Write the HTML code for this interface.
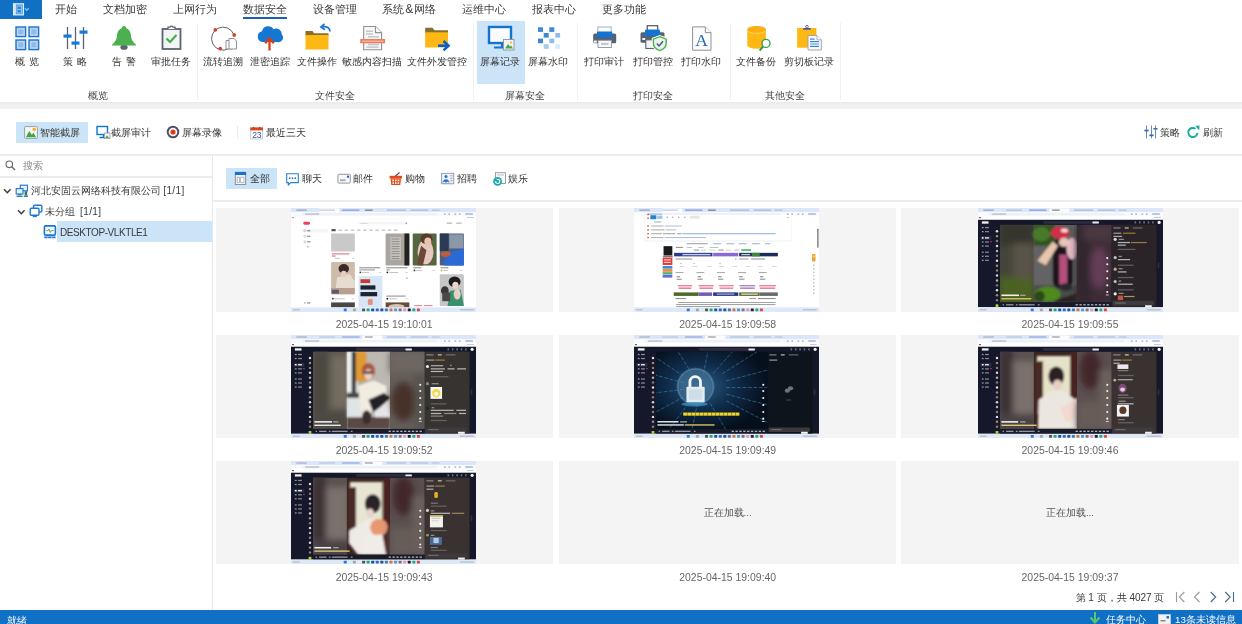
<!DOCTYPE html>
<html lang="zh"><head><meta charset="utf-8"><title>UI</title><style>
*{margin:0;padding:0;box-sizing:border-box}
html,body{width:1242px;height:624px;overflow:hidden;background:#fff}
#root{position:absolute;left:0;top:0;width:1242px;height:624px;will-change:transform}
body{font-family:"Liberation Sans",sans-serif;font-size:10px;color:#444;position:relative}
.a{position:absolute;white-space:nowrap}
.tab{position:absolute;top:2px;font-size:11px;line-height:14px;color:#3a3a3a;white-space:nowrap}
.rl{position:absolute;top:56px;font-size:9.75px;line-height:12px;color:#333;white-space:nowrap;text-align:center;transform:translateX(-50%)}
.gl{position:absolute;top:89.5px;font-size:9.75px;line-height:12px;color:#444;white-space:nowrap;transform:translateX(-50%)}
.sep{position:absolute;top:23px;width:1px;height:77px;background:#efefef}
.ic{position:absolute}
.lat{font-size:10px !important}
.sp{display:inline-block;width:4.5px}
.tb{position:absolute;font-size:9.75px;line-height:12px;color:#333;white-space:nowrap}
.cell{position:absolute;width:337.2px;height:104.2px;background:#f4f4f4}
.ts{position:absolute;width:337.2px;text-align:center;font-size:10.45px;line-height:12px;color:#666;white-space:nowrap}
.thumb{position:absolute;left:75.8px;top:0;width:185.2px;height:100%;overflow:hidden}
</style></head><body><div id="root">
<div class="a" style="left:0;top:0;width:42px;height:19px;background:#1170c4"></div>
<svg class="ic" style="left:12px;top:2px" width="20" height="15" viewBox="0 0 20 15"><rect x="1.600" y="1.800" width="9.800" height="11" fill="#3f97e4" stroke="#d6ecff" stroke-width="1.300"/><rect x="2.300" y="2" width="1.400" height="10.600" fill="#fff"/><rect x="5" y="4" width="4.600" height="7" fill="#2f86d6" stroke="#a9d2f7" stroke-width="0.800"/><rect x="5.800" y="7" width="3" height="0.900" fill="#a9d2f7"/><path d="M12.800 6.300 L14.800 8.300 L16.800 6.300" fill="none" stroke="#74bcff" stroke-width="1.500"/></svg>
<div class="tab" style="left:55px">开始</div>
<div class="tab" style="left:103px">文档加密</div>
<div class="tab" style="left:173px">上网行为</div>
<div class="tab" style="left:243px">数据安全</div>
<div class="tab" style="left:313px">设备管理</div>
<div class="tab" style="left:382px">系统<span style="font-size:12px;padding:0 1.2px;line-height:10px">&amp;</span>网络</div>
<div class="tab" style="left:462px">运维中心</div>
<div class="tab" style="left:532px">报表中心</div>
<div class="tab" style="left:602px">更多功能</div>
<div class="a" style="left:243px;top:17px;width:44px;height:2px;background:#1a5fb0"></div>
<div class="a" style="left:477px;top:21px;width:48px;height:63px;background:#cce4f7"></div>
<div class="sep" style="left:197px"></div>
<div class="sep" style="left:473px"></div>
<div class="sep" style="left:577px"></div>
<div class="sep" style="left:730px"></div>
<div class="sep" style="left:840px"></div>
<div class="a" style="left:0;top:101.700px;width:1242px;height:7.600px;background:linear-gradient(#e9e9e9,#f0f0f0 30%,#f3f3f3)"></div>
<svg class="ic" style="left:15px;top:26px" width="25" height="25" viewBox="0 0 25 25"><g fill="#b9d5f2" stroke="#1e73c8" stroke-width="1.4"><rect x="1" y="1" width="9.6" height="9.6"/><rect x="14" y="1" width="9.6" height="9.6"/><rect x="1" y="14" width="9.6" height="9.6"/><rect x="14" y="14" width="9.6" height="9.6"/></g><g fill="#8fbbe8"><rect x="3.3" y="3.3" width="5" height="5"/><rect x="16.3" y="3.3" width="5" height="5"/><rect x="3.3" y="16.3" width="5" height="5"/><rect x="16.3" y="16.3" width="5" height="5"/></g></svg>
<svg class="ic" style="left:63px;top:26px" width="25" height="25" viewBox="0 0 25 25"><g stroke="#5a6372" stroke-width="1.3"><line x1="4.5" y1="1" x2="4.5" y2="23"/><line x1="12.5" y1="1" x2="12.5" y2="23"/><line x1="20.5" y1="1" x2="20.5" y2="23"/></g><g fill="#1579d6"><rect x="0.5" y="8.5" width="8" height="3.2"/><rect x="8.5" y="15.5" width="8" height="3.2"/><rect x="16.5" y="4.5" width="8" height="3.2"/></g></svg>
<svg class="ic" style="left:111px;top:25px" width="26" height="26" viewBox="0 0 26 26"><ellipse cx="13" cy="22.2" rx="3.6" ry="2.6" fill="#5a6372"/><path d="M13 1 C14.4 1 15.2 2 15.2 3.2 C18.6 4.4 19.8 7.6 20 11 C20.2 15 22.5 17.5 25 19.8 L25 20.6 L1 20.6 L1 19.8 C3.5 17.5 5.800 15 6 11 C6.200 7.600 7.400 4.400 10.800 3.200 C10.800 2 11.600 1 13 1 Z" fill="#4caf50"/></svg>
<svg class="ic" style="left:160px;top:24px" width="24" height="27" viewBox="0 0 24 27"><rect x="2.5" y="5" width="18" height="20" fill="#f3f4f6" stroke="#5a6372" stroke-width="1.8"/><path d="M8 5 L8 3.200 L10 3.200 A1.600 1.600 0 0 1 13 3.200 L15 3.200 L15 5" fill="#fff" stroke="#5a6372" stroke-width="1.3"/><path d="M6.500 14.500 L10 18 L16.500 11" fill="none" stroke="#3fae49" stroke-width="2"/></svg>
<svg class="ic" style="left:209.900px;top:24.700px" width="30" height="28" viewBox="0 0 30 28"><path d="M18.500 23.800 A11.500 11.500 0 1 1 23.600 9" fill="none" stroke="#4a4f57" stroke-width="0.900"/><circle cx="5.300" cy="4.800" r="1.900" fill="#d2432c"/><circle cx="24.200" cy="10" r="1.900" fill="#d2432c"/><circle cx="10.200" cy="23.600" r="1.900" fill="#d2432c"/><path d="M16 15.500 h6 v8.500 h-6z" fill="#fff" stroke="#8d9299" stroke-width="1"/><path d="M19 13.500 h5 l2.500 2.500 v8 h-7.500z" fill="#fff" stroke="#8d9299" stroke-width="1"/></svg>
<svg class="ic" style="left:256.200px;top:25px" width="27" height="27" viewBox="0 0 27 27"><path d="M6.500 17 A5.500 5.500 0 0 1 6 6.200 A6.500 6.500 0 0 1 17.800 4.200 A5.500 5.500 0 0 1 25.800 9.500 A4.500 4.500 0 0 1 21.500 17 Z" fill="#1677d2"/><path d="M13.500 25.500 L13.500 14.500" stroke="#dc3c12" stroke-width="2.300" fill="none"/><path d="M9.200 18.200 L13.500 13.500 L17.800 18.200" stroke="#dc3c12" stroke-width="2.300" fill="none"/></svg>
<svg class="ic" style="left:303px;top:23.300px" width="30" height="28" viewBox="0 0 30 28"><path d="M2.500 8 L9.500 8 L11 10.200 L25.500 10.200 L25.500 13 L2.500 13 Z" fill="#8a6d2b"/><rect x="2.500" y="12" width="23" height="14.500" fill="#fdb813"/><path d="M27 8.500 C27 4.500 23.500 3.200 19.500 3.800" fill="none" stroke="#1677d2" stroke-width="1.800"/><path d="M21.500 0.800 L18 4 L21.800 6.800" fill="none" stroke="#1677d2" stroke-width="1.800"/></svg>
<svg class="ic" style="left:359px;top:24px" width="28" height="28" viewBox="0 0 28 28"><path d="M4.700 2.500 L16.500 2.500 L22.600 8.600 L22.600 25.800 L4.700 25.800 Z" fill="#f8f8f9" stroke="#8d9299" stroke-width="1.100"/><path d="M16.500 2.500 L16.500 8.600 L22.600 8.600" fill="#fff" stroke="#8d9299" stroke-width="1.100"/><g fill="#c3c6cd"><rect x="7" y="6.500" width="7" height="1.500"/><rect x="7" y="9.300" width="7" height="1.500"/><rect x="9" y="12" width="11" height="1.500"/><rect x="9" y="19.800" width="11" height="1.500"/><rect x="7.500" y="22.400" width="12" height="1.500"/></g><rect x="1.300" y="15" width="24.800" height="4.300" fill="#ee7b5a"/><rect x="3" y="16.700" width="21.500" height="0.900" fill="#fbd3c6"/></svg>
<svg class="ic" style="left:424px;top:25px" width="28" height="27" viewBox="0 0 28 27"><path d="M1.200 2.700 L8.500 2.700 L10.500 5.300 L24 5.300 L24 8.500 L1.200 8.500 Z" fill="#8a6d2b"/><rect x="1.200" y="7.300" width="22.800" height="15.200" fill="#fdb813"/><path d="M14 20.700 L24 20.700" stroke="#0a5fcb" stroke-width="2.600" fill="none"/><path d="M19.500 16 L24.500 20.700 L19.500 25.400" stroke="#0a5fcb" stroke-width="2.600" fill="none"/></svg>
<svg class="ic" style="left:487px;top:25px" width="28" height="27" viewBox="0 0 28 27"><rect x="2" y="2" width="22" height="16" fill="#fdfdff" stroke="#1273d0" stroke-width="2.400"/><path d="M7 22.500 L15 22.500 L15 19" fill="none" stroke="#1273d0" stroke-width="2.200"/><rect x="16.500" y="14.500" width="10.500" height="10.500" fill="#f2f2f2" stroke="#8d9299" stroke-width="0.900"/><path d="M18 23.500 L21 19 L23 21.500 L24 20.500 L26 23.500 Z" fill="#4aa84a"/><circle cx="24" cy="17.500" r="1.100" fill="#f5b31b"/></svg>
<svg class="ic" style="left:537px;top:26px" width="25" height="25" viewBox="0 0 25 25"><g fill="#3f88d4"><rect x="1" y="1.300" width="5" height="4.600"/><rect x="12.300" y="1.300" width="5" height="4.600"/><rect x="6.700" y="7" width="5" height="4.600"/><rect x="1" y="12.600" width="5" height="4.600"/></g><g fill="#93bde9"><rect x="18.300" y="7" width="4.800" height="4.600"/><rect x="12.300" y="12.600" width="5" height="4.600"/><rect x="6.700" y="18.200" width="5" height="4.600" opacity="0.8"/></g><rect x="18.300" y="18.200" width="4.800" height="4.600" fill="#dbe9f8"/></svg>
<svg class="ic" style="left:592px;top:26px" width="25" height="25" viewBox="0 0 25 25"><rect x="5.800" y="1" width="13.400" height="6" fill="#fafafa" stroke="#a3a8b0" stroke-width="0.900"/><rect x="1.200" y="7.500" width="23" height="9.800" rx="1.500" fill="#566173"/><rect x="5" y="5.600" width="15.200" height="5.800" rx="0.800" fill="#1273d0"/><rect x="1.800" y="14.500" width="3" height="2.200" fill="#f3f4f6"/><rect x="6" y="14.300" width="13.400" height="7.200" fill="#fafafa" stroke="#8d939d" stroke-width="0.900"/><rect x="9" y="16.800" width="7.500" height="2.200" fill="#c5c8ce"/></svg>
<svg class="ic" style="left:640px;top:25px" width="28" height="27" viewBox="0 0 28 27"><rect x="7.300" y="0.700" width="10.400" height="5.500" fill="#fff" stroke="#566173" stroke-width="1.300"/><rect x="0.500" y="7.200" width="24" height="10.600" rx="1.500" fill="#566173"/><rect x="5" y="4.600" width="15" height="6.300" rx="1.200" fill="#1273d0"/><rect x="2.300" y="13" width="3" height="2" fill="#f3f4f6"/><rect x="5.800" y="14.800" width="8" height="8.700" fill="#f3f4f6" stroke="#566173" stroke-width="1.100"/><path d="M19.800 11.700 L26.200 14.200 L26.200 18.500 C26.200 22 23 24.400 19.800 25.600 C16.600 24.400 13.400 22 13.400 18.500 L13.400 14.200 Z" fill="#e4f5e6" stroke="#fff" stroke-width="3.200"/><path d="M19.800 11.700 L26.200 14.200 L26.200 18.500 C26.200 22 23 24.400 19.800 25.600 C16.600 24.400 13.400 22 13.400 18.500 L13.400 14.200 Z" fill="#e4f5e6" stroke="#4caf50" stroke-width="1.400"/><path d="M16.800 18.600 L19 20.900 L23 16.300" fill="none" stroke="#5a4a8a" stroke-width="1.400"/></svg>
<svg class="ic" style="left:690px;top:25px" width="23" height="27" viewBox="0 0 23 27"><path d="M2.600 1.900 L15.300 1.900 L21 7.600 L21 25.200 L2.600 25.200 Z" fill="#fcfcfd" stroke="#8d9299" stroke-width="1"/><path d="M15.300 1.900 L15.300 7.600 L21 7.600" fill="#fff" stroke="#8d9299" stroke-width="1"/><text x="11.500" y="21.300" font-family="Liberation Serif,serif" font-size="17.500" fill="#2468b8" text-anchor="middle">A</text></svg>
<svg class="ic" style="left:746px;top:25px" width="27" height="28" viewBox="0 0 27 28"><path d="M1.300 4.200 L1.300 20.300 A9.300 3.400 0 0 0 19.900 20.300 L19.900 4.200 Z" fill="#fdb813"/><ellipse cx="10.600" cy="4.400" rx="9.300" ry="3.300" fill="#fbad0e"/><path d="M1.800 5.800 A9 3.200 0 0 0 19.400 5.800" fill="none" stroke="#fee08a" stroke-width="0.700"/><circle cx="20" cy="18.400" r="4" fill="#fff" stroke="#319f4c" stroke-width="1.300"/><path d="M17.200 21.500 L13.600 25.500" stroke="#319f4c" stroke-width="1.900" fill="none"/></svg>
<svg class="ic" style="left:796px;top:24px" width="27" height="29" viewBox="0 0 27 29"><rect x="1.100" y="4" width="19.300" height="19.700" fill="#fdb813"/><path d="M7.300 5.800 L7.300 4 L9.800 4 A1.900 1.900 0 0 1 12.200 4 L14.700 4 L14.700 5.800 Z" fill="#4a5a9a"/><circle cx="11" cy="2.700" r="1.300" fill="#fff" stroke="#4a5a9a" stroke-width="0.900"/><path d="M12 11.500 L21 11.500 L25.300 15.800 L25.300 26 L12 26 Z" fill="#f8f8fa" stroke="#9aa0aa" stroke-width="0.900"/><path d="M21 11.500 L21 15.800 L25.300 15.800" fill="#fff" stroke="#9aa0aa" stroke-width="0.800"/><g fill="#3a82d8"><rect x="14" y="14.500" width="4.500" height="1.200"/><rect x="14" y="17" width="9" height="1.200"/><rect x="14" y="21.800" width="9" height="1.200"/></g><rect x="14" y="19.400" width="9" height="1.200" fill="#5ab4d8"/></svg>
<div class="rl" style="left:27px">概<span class="sp"></span>览</div>
<div class="rl" style="left:75px">策<span class="sp"></span>略</div>
<div class="rl" style="left:124px">告<span class="sp"></span>警</div>
<div class="rl" style="left:171px">审批任务</div>
<div class="rl" style="left:223px">流转追溯</div>
<div class="rl" style="left:270px">泄密追踪</div>
<div class="rl" style="left:317px">文件操作</div>
<div class="rl" style="left:372px">敏感内容扫描</div>
<div class="rl" style="left:437px">文件外发管控</div>
<div class="rl" style="left:500px">屏幕记录</div>
<div class="rl" style="left:548px">屏幕水印</div>
<div class="rl" style="left:604px">打印审计</div>
<div class="rl" style="left:653px">打印管控</div>
<div class="rl" style="left:701px">打印水印</div>
<div class="rl" style="left:756px">文件备份</div>
<div class="rl" style="left:809px">剪切板记录</div>
<div class="gl" style="left:98px">概览</div>
<div class="gl" style="left:335px">文件安全</div>
<div class="gl" style="left:525px">屏幕安全</div>
<div class="gl" style="left:653px">打印安全</div>
<div class="gl" style="left:785px">其他安全</div>
<div class="a" style="left:0;top:154.200px;width:1242px;height:2.200px;background:#ededed"></div>
<div class="a" style="left:16px;top:122px;width:72px;height:21px;background:#cce4f7"></div>
<svg class="ic" style="left:24px;top:126px" width="14" height="13" viewBox="0 0 14 13"><rect x="0.600" y="0.600" width="12.800" height="11.800" rx="0.800" fill="#f6f6f6" stroke="#9a9fa6" stroke-width="1"/><path d="M1.800 11.200 L5.200 5 L7.800 8.800 L9.500 6.800 L12.200 11.200 Z" fill="#3fa64a"/><circle cx="10.200" cy="3.400" r="1.700" fill="#f2b01e"/></svg>
<div class="tb" style="left:40px;top:127px">智能截屏</div>
<svg class="ic" style="left:95.800px;top:125px" width="15" height="15" viewBox="0 0 15 15"><rect x="1" y="1.500" width="10.500" height="8" fill="#fff" stroke="#1273d0" stroke-width="1.400"/><path d="M3.500 12.500 L7.500 12.500 L7.500 10" fill="none" stroke="#1273d0" stroke-width="1.400"/><rect x="8.300" y="8" width="5.700" height="5.700" fill="#f2f2f2" stroke="#8d9299" stroke-width="0.700"/><path d="M9 13 L11 10.500 L13.300 13 Z" fill="#4aa84a"/></svg>
<div class="tb" style="left:111px;top:127px">截屏审计</div>
<svg class="ic" style="left:166px;top:125px" width="14" height="14" viewBox="0 0 14 14"><circle cx="7" cy="7" r="5.300" fill="#fff" stroke="#4d5068" stroke-width="2"/><circle cx="7" cy="7" r="2.600" fill="#e23d12"/></svg>
<div class="tb" style="left:182px;top:127px">屏幕录像</div>
<div class="a" style="left:237px;top:126px;width:1px;height:13px;background:#ebebeb"></div>
<svg class="ic" style="left:250px;top:126.500px" width="14" height="13" viewBox="0 0 14 13"><rect x="0.700" y="0.800" width="12" height="11.200" fill="#fdfdfe" stroke="#b9bec6" stroke-width="0.800"/><rect x="0.400" y="0.500" width="12.600" height="2.900" fill="#e2441c"/><rect x="3" y="0" width="1.200" height="1.600" fill="#a8300e"/><rect x="9.200" y="0" width="1.200" height="1.600" fill="#a8300e"/><text x="6.700" y="10.900" font-size="8.600" font-family="Liberation Sans,sans-serif" fill="#3a5a9a" text-anchor="middle" letter-spacing="-0.300">23</text></svg>
<div class="tb" style="left:266px;top:127px">最近三天</div>
<svg class="ic" style="left:1143px;top:125px" width="15" height="15" viewBox="0 0 15 15"><g stroke="#4d6a96" stroke-width="0.800"><line x1="3.500" y1="0.500" x2="3.500" y2="13.300"/><line x1="8.500" y1="0.500" x2="8.500" y2="13.300"/><line x1="12.500" y1="0.500" x2="12.500" y2="13.300"/></g><g fill="#2a6ab8"><rect x="1.400" y="4.700" width="4.200" height="1.700"/><rect x="6.400" y="9.500" width="4.200" height="1.700"/><rect x="10.500" y="3" width="4" height="1.500"/></g></svg>
<div class="tb" style="left:1160px;top:127px">策略</div>
<svg class="ic" style="left:1186px;top:125px" width="15" height="15" viewBox="0 0 15 15"><path d="M11.480 7.900 A4.600 4.600 0 1 1 9.540 3.730" fill="none" stroke="#14b09a" stroke-width="2"/><path d="M9.300 0.900 L13.500 0.500 L13.300 5.400 Z" fill="#14b09a"/></svg>
<div class="tb" style="left:1203px;top:127px">刷新</div>
<div class="a" style="left:211.800px;top:156px;width:1.400px;height:454px;background:#e9e9e9"></div>
<div class="a" style="left:0;top:176px;width:212px;height:1.600px;background:#ececec"></div>
<svg class="ic" style="left:5px;top:160px" width="11" height="11" viewBox="0 0 11 11"><circle cx="4.300" cy="4.300" r="3.300" fill="none" stroke="#666" stroke-width="1.100"/><path d="M6.800 6.800 L10 10" stroke="#666" stroke-width="1.300"/></svg>
<div class="tb" style="left:22.5px;top:160px;color:#888">搜索</div>
<svg class="ic" style="left:3px;top:187.700px" width="9" height="7" viewBox="0 0 9 7"><path d="M1 1.200 L4.300 4.800 L7.600 1.200" fill="none" stroke="#3a3a3a" stroke-width="1.400"/></svg>
<svg class="ic" style="left:15px;top:183.500px" width="14" height="14" viewBox="0 0 14 14"><rect x="5.300" y="1.200" width="7.200" height="5.600" fill="#eaf3fc" stroke="#2a7ad0" stroke-width="1.200"/><rect x="1.200" y="4.600" width="6.800" height="5.400" fill="#eaf3fc" stroke="#2a7ad0" stroke-width="1.200"/><rect x="2.800" y="10" width="3.600" height="1.200" fill="#2a7ad0"/><rect x="1.500" y="11.600" width="6.200" height="1.400" fill="#2e8a8a"/><rect x="9.600" y="7.200" width="2.600" height="4.400" fill="#2e7a6a"/><rect x="8.800" y="11.600" width="4.200" height="1.400" fill="#2e8a8a"/></svg>
<div class="tb" style="left:31px;top:185px;color:#3a3a3a">河北安固云网络科技有限公司</div><div class="tb lat" style="left:163.300px;top:185px;color:#3a3a3a;letter-spacing:0.350px">[1/1]</div>
<svg class="ic" style="left:16.800px;top:208.700px" width="9" height="7" viewBox="0 0 9 7"><path d="M1 1.200 L4.300 4.800 L7.600 1.200" fill="none" stroke="#3a3a3a" stroke-width="1.400"/></svg>
<svg class="ic" style="left:28.500px;top:203.800px" width="14" height="15" viewBox="0 0 14 15"><rect x="4.500" y="1.200" width="8.300" height="6.800" rx="1.200" fill="#fff" stroke="#1f78d4" stroke-width="1.400"/><rect x="1.200" y="4.300" width="8.800" height="7" rx="1.200" fill="#fff" stroke="#1f78d4" stroke-width="1.400"/><rect x="3.800" y="11.800" width="4" height="1.300" fill="#1f78d4"/></svg>
<div class="tb" style="left:45px;top:206px;color:#3a3a3a">未分组</div><div class="tb lat" style="left:80.100px;top:206px;color:#3a3a3a;letter-spacing:0.350px">[1/1]</div>
<div class="a" style="left:57px;top:221px;width:155px;height:21px;background:#cce4f7"></div>
<svg class="ic" style="left:43px;top:225px" width="14" height="14" viewBox="0 0 14 14"><rect x="1.400" y="0.900" width="11" height="9.200" rx="1" fill="#f4f9ff" stroke="#1f74d0" stroke-width="1.600"/><path d="M3.300 5.600 L5.200 5.600 L6 4 L7.400 7.400 L8.300 5.600 L10.600 5.600" fill="none" stroke="#3fae49" stroke-width="0.900"/><rect x="1.300" y="11.500" width="11.200" height="1.700" fill="#1f74d0"/><rect x="4.600" y="11.500" width="0.500" height="1.700" fill="#fff"/><rect x="8.600" y="11.500" width="0.500" height="1.700" fill="#fff"/></svg>
<div class="tb lat" style="left:60px;top:226.500px;color:#3a3a3a;letter-spacing:-0.420px">DESKTOP-VLKTLE1</div>
<div class="a" style="left:213px;top:199.800px;width:1029px;height:1.800px;background:#ededed"></div>
<div class="a" style="left:226px;top:168px;width:51px;height:21px;background:#cce4f7"></div>
<svg class="ic" style="left:234px;top:171px" width="13" height="15" viewBox="0 0 13 15"><rect x="1.300" y="1.300" width="10.400" height="12.200" fill="#f4f4f4" stroke="#808791" stroke-width="0.900"/><rect x="1" y="1" width="11" height="3" fill="#1273d0"/><rect x="3.200" y="6.200" width="2.300" height="5.300" fill="#fff" stroke="#9aa0a8" stroke-width="0.700"/><rect x="6.700" y="6.200" width="3.300" height="5.300" fill="#fff" stroke="#9aa0a8" stroke-width="0.700"/></svg>
<div class="tb" style="left:250px;top:173px">全部</div>
<svg class="ic" style="left:285px;top:172px" width="15" height="14" viewBox="0 0 15 14"><path d="M1.700 1.700 L13.300 1.700 L13.300 10.600 L5.800 10.600 L3.300 13 L3.300 10.600 L1.700 10.600 Z" fill="#fff" stroke="#2a7fd6" stroke-width="1.100"/><g fill="#2a6fc0"><circle cx="4.700" cy="6.200" r="0.850"/><circle cx="7.500" cy="6.200" r="0.850"/><circle cx="10.300" cy="6.200" r="0.850"/></g></svg>
<div class="tb" style="left:302px;top:173px">聊天</div>
<svg class="ic" style="left:337px;top:173px" width="14" height="12" viewBox="0 0 14 12"><rect x="0.900" y="1.300" width="12.400" height="8.800" rx="0.800" fill="#f7f8fa" stroke="#858c96" stroke-width="0.900"/><rect x="10" y="2.700" width="2" height="2" fill="#1f5fb0"/><rect x="3" y="6.300" width="5.500" height="1.800" fill="#a4aab3"/></svg>
<div class="tb" style="left:353px;top:173px">邮件</div>
<svg class="ic" style="left:388px;top:171px" width="15" height="15" viewBox="0 0 15 15"><path d="M7 5.500 L11.500 1.500" stroke="#5a4a44" stroke-width="1.100"/><rect x="1.600" y="4.800" width="12.400" height="2.700" fill="#e04a1c"/><path d="M2.500 7.500 L13 7.500 L12.300 14 L3.300 14 Z" fill="#e04a1c"/><g fill="#fff"><rect x="4.300" y="8.600" width="1.600" height="1.700"/><rect x="7" y="8.600" width="1.600" height="1.700"/><rect x="9.700" y="8.600" width="1.600" height="1.700"/><rect x="4.500" y="11.300" width="1.500" height="1.600"/><rect x="7" y="11.300" width="1.600" height="1.600"/><rect x="9.600" y="11.300" width="1.500" height="1.600"/></g></svg>
<div class="tb" style="left:405px;top:173px">购物</div>
<svg class="ic" style="left:440px;top:172px" width="15" height="13" viewBox="0 0 15 13"><rect x="1.600" y="1.300" width="12.200" height="10.500" fill="#eef4fb" stroke="#8d95a3" stroke-width="0.900"/><circle cx="6" cy="4.500" r="1.500" fill="#2a6fc4"/><path d="M3.200 9.300 C3.200 6.600 8.800 6.600 8.800 9.300 L8.800 10 L3.200 10 Z" fill="#2a6fc4"/><rect x="3" y="9.500" width="2.200" height="2.200" fill="#fff" stroke="#2a6fc4" stroke-width="0.500"/><rect x="6.800" y="9.500" width="2.200" height="2.200" fill="#fff" stroke="#2a6fc4" stroke-width="0.500"/><rect x="10.300" y="3.300" width="2.200" height="1" fill="#9aa3b0"/><rect x="10.300" y="5.800" width="2.200" height="1" fill="#9aa3b0"/><rect x="10.300" y="8.300" width="2.200" height="1" fill="#9aa3b0"/></svg>
<div class="tb" style="left:457px;top:173px">招聘</div>
<svg class="ic" style="left:492px;top:171px" width="15" height="16" viewBox="0 0 15 16"><rect x="3.500" y="1.700" width="10" height="10.800" fill="#fbfbfc" stroke="#8d949e" stroke-width="0.900"/><rect x="5" y="3.500" width="7" height="0.900" fill="#b4bac2"/><circle cx="5.600" cy="10.400" r="4.400" fill="#17a9b4"/><path d="M3.600 10.300 A2.100 2.100 0 1 0 5.800 8.300" fill="none" stroke="#fff" stroke-width="1.100"/><path d="M4.600 7.500 L6.500 8.300 L5 9.600 Z" fill="#fff"/></svg>
<div class="tb" style="left:508px;top:173px">娱乐</div>
<div class="cell" style="left:215.5px;top:207.7px;height:104.1px"><svg class="thumb" style="left:75.5px" viewBox="0 0 1053 592" preserveAspectRatio="none"><defs><clipPath id="acv"><rect x="125" y="95" width="636" height="442"/></clipPath><filter id="ab1" x="-20%" y="-20%" width="140%" height="140%"><feGaussianBlur stdDeviation="18"/></filter><filter id="ab2" x="-20%" y="-20%" width="140%" height="140%"><feGaussianBlur stdDeviation="7"/></filter><filter id="ab3" x="-20%" y="-20%" width="140%" height="140%"><feGaussianBlur stdDeviation="3"/></filter></defs><rect x="0" y="0" width="1053" height="592" fill="#fff"/><rect x="0" y="0" width="1053" height="24" fill="#dbe6f8"/><rect x="160" y="3" width="115" height="21" rx="4" fill="#fdfdff"/><rect x="30" y="8" width="60" height="7" rx="2" fill="#5b6f96" opacity="0.55"/><rect x="160" y="8" width="90" height="7" rx="2" fill="#8aa0c8" opacity="0.55"/><rect x="290" y="8" width="100" height="7" rx="2" fill="#3d59c8" opacity="0.55"/><rect x="420" y="8" width="45" height="7" rx="2" fill="#222" opacity="0.55"/><rect x="545" y="8" width="110" height="7" rx="2" fill="#7c93c0" opacity="0.55"/><rect x="680" y="8" width="100" height="7" rx="2" fill="#7c93c0" opacity="0.55"/><rect x="800" y="8" width="45" height="7" rx="2" fill="#8aa0c8" opacity="0.55"/><rect x="0" y="24" width="1053" height="22" fill="#f8fafd"/><rect x="62" y="28" width="770" height="14" rx="7" fill="#edf1f8"/><rect x="80" y="32" width="80" height="5" fill="#9aa3b3"/><rect x="990" y="29" width="45" height="11" rx="5" fill="#b7c6e6"/><rect x="870" y="31" width="9" height="8" fill="#a5adbb"/><rect x="895" y="31" width="9" height="8" fill="#a5adbb"/><rect x="930" y="31" width="9" height="8" fill="#a5adbb"/><rect x="955" y="31" width="9" height="8" fill="#a5adbb"/><rect x="5" y="52" width="12" height="6" fill="#555" opacity="0.6"/><rect x="1000" y="52" width="40" height="5" fill="#c0c6d0"/><rect x="70" y="78" width="38" height="17" rx="8" fill="#f0405a"/><rect x="385" y="80" width="275" height="14" rx="7" fill="#f5f5f5"/><rect x="395" y="85" width="40" height="4" fill="#ccc"/><rect x="652" y="83" width="8" height="8" fill="#999"/><rect x="885" y="83" width="30" height="6" fill="#aaa"/><rect x="940" y="83" width="30" height="6" fill="#aaa"/><rect x="62" y="118" width="150" height="22" rx="10" fill="#f6f6f6"/><circle cx="79" cy="129" r="6" fill="none" stroke="#888" stroke-width="2"/><rect x="92" y="125" width="18" height="8" fill="#555" opacity="0.6"/><circle cx="79" cy="161" r="6" fill="none" stroke="#888" stroke-width="2"/><rect x="92" y="157" width="18" height="8" fill="#555" opacity="0.6"/><circle cx="79" cy="192" r="6" fill="none" stroke="#888" stroke-width="2"/><rect x="92" y="188" width="18" height="8" fill="#555" opacity="0.6"/><rect x="92" y="216" width="8" height="8" fill="#777" opacity="0.6"/><rect x="75" y="536" width="8" height="8" fill="#777" opacity="0.6"/><rect x="92" y="536" width="18" height="8" fill="#555" opacity="0.6"/><rect x="230" y="120" width="24" height="12" rx="3" fill="#555"/><rect x="270" y="123" width="20" height="6" fill="#b5b5b5"/><rect x="305" y="123" width="20" height="6" fill="#b5b5b5"/><rect x="340" y="123" width="20" height="6" fill="#b5b5b5"/><rect x="375" y="123" width="20" height="6" fill="#b5b5b5"/><rect x="410" y="123" width="20" height="6" fill="#b5b5b5"/><rect x="445" y="123" width="20" height="6" fill="#b5b5b5"/><rect x="480" y="123" width="20" height="6" fill="#b5b5b5"/><rect x="515" y="123" width="20" height="6" fill="#b5b5b5"/><rect x="550" y="123" width="20" height="6" fill="#b5b5b5"/><rect x="585" y="123" width="20" height="6" fill="#b5b5b5"/><rect x="228" y="145" width="135" height="102" rx="6" fill="#c9c9c9"/><rect x="232" y="258" width="100" height="6" fill="#e06a7a"/><rect x="232" y="270" width="22" height="6" fill="#e06a7a"/><rect x="248" y="283" width="30" height="5" fill="#bbb"/><rect x="345" y="283" width="14" height="5" fill="#ccc"/><g filter="url(#ab3)"><rect x="228" y="307" width="135" height="183" rx="6" fill="#cdbcaa"/><ellipse cx="300" cy="345" rx="30" ry="26" fill="#3a2c28"/><path d="M250 490 L262 395 L335 375 L363 420 L363 490 Z" fill="#e8dcd0"/><rect x="228" y="455" width="135" height="35" fill="#b8a090"/><ellipse cx="300" cy="375" rx="16" ry="18" fill="#e8ccc0"/><rect x="232" y="465" width="40" height="22" fill="#5a5a6a"/></g><rect x="245" y="514" width="60" height="5" fill="#bbb"/><rect x="345" y="514" width="14" height="5" fill="#ccc"/><circle cx="238" cy="516" r="5" fill="#333"/><rect x="228" y="537" width="135" height="28" fill="#4a4644"/><rect x="388" y="337" width="120" height="6" fill="#444" opacity="0.6"/><rect x="388" y="349" width="90" height="6" fill="#555" opacity="0.6"/><circle cx="394" cy="366" r="5" fill="#333"/><rect x="404" y="364" width="40" height="5" fill="#bbb"/><rect x="500" y="364" width="14" height="5" fill="#ccc"/><rect x="384" y="387" width="135" height="178" fill="#d6e6f6"/><rect x="395" y="405" width="55" height="22" fill="#c83c30"/><rect x="395" y="440" width="85" height="24" fill="#1c2430"/><rect x="395" y="478" width="95" height="24" fill="#1c2430"/><rect x="437" y="518" width="28" height="34" rx="8" fill="#e89080"/><g filter="url(#ab3)"><rect x="538" y="145" width="135" height="182" rx="6" fill="#a9a5a0"/><rect x="645" y="145" width="28" height="182" fill="#242424"/><rect x="565" y="165" width="60" height="130" fill="#c4c0ba"/></g><rect x="572" y="175" width="45" height="3" fill="#6a6864"/><rect x="572" y="189" width="45" height="3" fill="#6a6864"/><rect x="572" y="203" width="45" height="3" fill="#6a6864"/><rect x="572" y="217" width="45" height="3" fill="#6a6864"/><rect x="572" y="231" width="45" height="3" fill="#6a6864"/><rect x="572" y="245" width="45" height="3" fill="#6a6864"/><rect x="572" y="259" width="45" height="3" fill="#6a6864"/><rect x="572" y="273" width="45" height="3" fill="#6a6864"/><rect x="572" y="287" width="45" height="3" fill="#6a6864"/><rect x="542" y="337" width="120" height="6" fill="#444" opacity="0.6"/><rect x="542" y="349" width="20" height="6" fill="#555" opacity="0.6"/><circle cx="548" cy="366" r="5" fill="#111"/><rect x="560" y="364" width="50" height="5" fill="#bbb"/><rect x="650" y="364" width="14" height="5" fill="#ccc"/><rect x="655" y="395" width="8" height="8" fill="#aaa"/><rect x="542" y="498" width="110" height="6" fill="#444" opacity="0.6"/><circle cx="548" cy="516" r="5" fill="#111"/><rect x="560" y="514" width="45" height="5" fill="#bbb"/><rect x="650" y="514" width="14" height="5" fill="#ccc"/><g filter="url(#ab3)"><rect x="538" y="537" width="135" height="28" fill="#6a4a3a"/><ellipse cx="600" cy="560" rx="45" ry="14" fill="#d8c0b0"/></g><g filter="url(#ab3)"><rect x="692" y="145" width="136" height="182" rx="6" fill="#56663f"/><ellipse cx="765" cy="250" rx="45" ry="70" fill="#e6c8bc"/><ellipse cx="770" cy="175" rx="34" ry="30" fill="#5a3a2c"/><ellipse cx="778" cy="190" rx="20" ry="22" fill="#e8c4b0"/><path d="M720 290 L740 215 L770 240 L750 327 L720 327 Z" fill="#6a4a38"/></g><rect x="696" y="337" width="45" height="6" fill="#444" opacity="0.6"/><circle cx="702" cy="355" r="5" fill="#333"/><rect x="712" y="353" width="35" height="5" fill="#bbb"/><rect x="805" y="353" width="14" height="5" fill="#ccc"/><rect x="700" y="553" width="45" height="5" fill="#e06a7a"/><rect x="755" y="553" width="50" height="5" fill="#e06a7a"/><g filter="url(#ab3)"><rect x="846" y="145" width="137" height="182" rx="6" fill="#4c5f86"/><rect x="846" y="145" width="50" height="100" fill="#2c3a56"/><rect x="900" y="150" width="80" height="80" fill="#8a98a8"/><path d="M870 327 L880 260 L983 230 L983 327 Z" fill="#2a6ad6"/><ellipse cx="880" cy="262" rx="28" ry="16" fill="#b8603a"/></g><rect x="850" y="337" width="45" height="6" fill="#444" opacity="0.6"/><circle cx="856" cy="355" r="5" fill="#d8a030"/><rect x="866" y="353" width="25" height="5" fill="#bbb"/><rect x="960" y="353" width="14" height="5" fill="#ccc"/><g filter="url(#ab3)"><rect x="846" y="377" width="137" height="180" rx="6" fill="#c4c6c8"/><ellipse cx="930" cy="420" rx="34" ry="30" fill="#1e1a1c"/><ellipse cx="935" cy="440" rx="18" ry="20" fill="#ecd4c8"/><path d="M890 557 L905 470 L965 465 L983 557 Z" fill="#3b8f6e"/><ellipse cx="875" cy="470" rx="22" ry="25" fill="#3a3436"/><rect x="860" y="480" width="45" height="50" fill="#4a484a"/><ellipse cx="945" cy="490" rx="20" ry="30" fill="#e8d0c4"/></g><rect x="0" y="556" width="1053" height="9" fill="#fff" opacity="0"/><rect x="0" y="565" width="1053" height="27" fill="#dfe8f6"/><rect x="300" y="571" width="17" height="16" rx="3" fill="#2b7de0"/><rect x="326" y="571" width="17" height="16" rx="3" fill="#dfe8f6"/><rect x="352" y="571" width="17" height="16" rx="3" fill="#9aa"/><rect x="378" y="571" width="17" height="16" rx="3" fill="#dfe8f6"/><rect x="404" y="571" width="17" height="16" rx="3" fill="#555"/><rect x="430" y="571" width="17" height="16" rx="3" fill="#2a6"/><rect x="456" y="571" width="17" height="16" rx="3" fill="#15a"/><rect x="482" y="571" width="17" height="16" rx="3" fill="#36c"/><rect x="508" y="571" width="17" height="16" rx="3" fill="#258"/><rect x="534" y="571" width="17" height="16" rx="3" fill="#47b"/><rect x="560" y="571" width="17" height="16" rx="3" fill="#c74"/><rect x="586" y="571" width="17" height="16" rx="3" fill="#59c"/><rect x="612" y="571" width="17" height="16" rx="3" fill="#777"/><rect x="638" y="571" width="17" height="16" rx="3" fill="#d9b"/><rect x="664" y="571" width="17" height="16" rx="3" fill="#223"/><rect x="690" y="571" width="17" height="16" rx="3" fill="#2a8"/><rect x="716" y="571" width="17" height="16" rx="3" fill="#d44"/><rect x="10" y="574" width="40" height="9" rx="3" fill="#b9c4d6"/><rect x="960" y="574" width="80" height="9" rx="3" fill="#b9c4d6"/></svg></div>
<div class="ts" style="left:215.5px;top:318.7px">2025-04-15 19:10:01</div>
<div class="cell" style="left:559.1px;top:207.7px;height:104.1px"><svg class="thumb" style="left:74.8px" viewBox="0 0 1053 592" preserveAspectRatio="none"><defs><clipPath id="bcv"><rect x="125" y="95" width="636" height="442"/></clipPath><filter id="bb1" x="-20%" y="-20%" width="140%" height="140%"><feGaussianBlur stdDeviation="18"/></filter><filter id="bb2" x="-20%" y="-20%" width="140%" height="140%"><feGaussianBlur stdDeviation="7"/></filter><filter id="bb3" x="-20%" y="-20%" width="140%" height="140%"><feGaussianBlur stdDeviation="3"/></filter></defs><rect x="0" y="0" width="1053" height="592" fill="#fff"/><rect x="0" y="0" width="1053" height="24" fill="#dbe6f8"/><rect x="160" y="3" width="115" height="21" rx="4" fill="#fdfdff"/><rect x="30" y="8" width="60" height="7" rx="2" fill="#5b6f96" opacity="0.55"/><rect x="160" y="8" width="90" height="7" rx="2" fill="#8aa0c8" opacity="0.55"/><rect x="290" y="8" width="100" height="7" rx="2" fill="#3d59c8" opacity="0.55"/><rect x="420" y="8" width="45" height="7" rx="2" fill="#222" opacity="0.55"/><rect x="545" y="8" width="110" height="7" rx="2" fill="#7c93c0" opacity="0.55"/><rect x="680" y="8" width="100" height="7" rx="2" fill="#7c93c0" opacity="0.55"/><rect x="800" y="8" width="45" height="7" rx="2" fill="#8aa0c8" opacity="0.55"/><rect x="0" y="24" width="1053" height="22" fill="#f8fafd"/><rect x="62" y="28" width="770" height="14" rx="7" fill="#edf1f8"/><rect x="80" y="32" width="80" height="5" fill="#9aa3b3"/><rect x="990" y="29" width="45" height="11" rx="5" fill="#b7c6e6"/><rect x="870" y="31" width="9" height="8" fill="#a5adbb"/><rect x="895" y="31" width="9" height="8" fill="#a5adbb"/><rect x="930" y="31" width="9" height="8" fill="#a5adbb"/><rect x="955" y="31" width="9" height="8" fill="#a5adbb"/><rect x="5" y="52" width="12" height="6" fill="#555" opacity="0.6"/><rect x="1000" y="52" width="40" height="5" fill="#c0c6d0"/><rect x="0" y="45" width="1053" height="520" fill="#fff"/><rect x="300" y="200" width="120" height="6" fill="#666" opacity="0.6"/><rect x="450" y="201" width="45" height="5" fill="#8ab"/><rect x="525" y="201" width="45" height="5" fill="#8ab"/><rect x="595" y="201" width="45" height="5" fill="#8ab"/><rect x="670" y="201" width="45" height="5" fill="#8ab"/><rect x="745" y="201" width="30" height="5" fill="#8ab"/><rect x="710" y="178" width="100" height="8" fill="#7a4ad0"/><rect x="168" y="217" width="50" height="53" fill="#1a1a1a"/><rect x="165" y="272" width="55" height="8" fill="#222" opacity="0.6"/><rect x="163" y="282" width="55" height="42" fill="#e03a3a"/><rect x="170" y="292" width="40" height="6" fill="#fff" opacity="0.8"/><rect x="170" y="306" width="40" height="6" fill="#fff" opacity="0.8"/><rect x="163" y="330" width="55" height="15" fill="#3a8ae0"/><rect x="163" y="347" width="55" height="16" fill="#e8903a"/><rect x="163" y="365" width="55" height="13" fill="#4ab06a"/><rect x="163" y="380" width="55" height="16" fill="#6a6ae0"/><rect x="238" y="221" width="40" height="6" fill="#444" opacity="0.6"/><rect x="300" y="222" width="30" height="5" fill="#abc"/><rect x="365" y="222" width="30" height="5" fill="#abc"/><rect x="430" y="222" width="50" height="5" fill="#abc"/><rect x="340" y="236" width="30" height="7" fill="#9ab"/><rect x="380" y="236" width="30" height="7" fill="#cdd"/><rect x="430" y="236" width="30" height="7" fill="#ddc"/><rect x="480" y="236" width="30" height="7" fill="#9ab"/><rect x="520" y="236" width="30" height="7" fill="#dda"/><rect x="570" y="236" width="30" height="7" fill="#ccc"/><rect x="610" y="234" width="55" height="10" fill="#4ac06a"/><rect x="228" y="255" width="218" height="20" fill="#2a3a8a"/><rect x="275" y="261" width="160" height="8" fill="#dfe6ff" opacity="0.85"/><rect x="450" y="255" width="143" height="20" fill="#8a6ad6"/><rect x="598" y="255" width="220" height="20" fill="#1e2a5a"/><rect x="670" y="255" width="45" height="20" fill="#3a8a3a"/><rect x="610" y="261" width="50" height="8" fill="#eee" opacity="0.8"/><rect x="236" y="287" width="95" height="6" fill="#555" opacity="0.6"/><rect x="575" y="287" width="8" height="6" fill="#999"/><rect x="596" y="287" width="55" height="6" fill="#666" opacity="0.6"/><rect x="665" y="287" width="80" height="6" fill="#444" opacity="0.6"/><rect x="260" y="330" width="26" height="5" fill="#cfd6d0"/><rect x="335" y="330" width="26" height="5" fill="#cfd6d0"/><rect x="415" y="330" width="26" height="5" fill="#cfd6d0"/><rect x="485" y="330" width="26" height="5" fill="#cfd6d0"/><rect x="560" y="330" width="26" height="5" fill="#cfd6d0"/><rect x="635" y="330" width="26" height="5" fill="#cfd6d0"/><rect x="705" y="330" width="26" height="5" fill="#cfd6d0"/><rect x="785" y="330" width="26" height="5" fill="#cfd6d0"/><rect x="262" y="314" width="8" height="5" fill="#aaa"/><rect x="338" y="314" width="8" height="5" fill="#aaa"/><rect x="485" y="314" width="8" height="5" fill="#aaa"/><rect x="236" y="365" width="45" height="5" fill="#555" opacity="0.6"/><rect x="242" y="388" width="20" height="6" fill="#333" opacity="0.6"/><rect x="242" y="402" width="30" height="6" fill="#444" opacity="0.6"/><rect x="355" y="365" width="45" height="5" fill="#555" opacity="0.6"/><rect x="361" y="388" width="20" height="6" fill="#333" opacity="0.6"/><rect x="361" y="402" width="30" height="6" fill="#444" opacity="0.6"/><rect x="472" y="365" width="45" height="5" fill="#555" opacity="0.6"/><rect x="478" y="388" width="20" height="6" fill="#333" opacity="0.6"/><rect x="478" y="402" width="30" height="6" fill="#444" opacity="0.6"/><rect x="592" y="365" width="45" height="5" fill="#555" opacity="0.6"/><rect x="598" y="388" width="20" height="6" fill="#333" opacity="0.6"/><rect x="598" y="402" width="30" height="6" fill="#444" opacity="0.6"/><rect x="710" y="365" width="45" height="5" fill="#555" opacity="0.6"/><rect x="716" y="388" width="20" height="6" fill="#333" opacity="0.6"/><rect x="716" y="402" width="30" height="6" fill="#444" opacity="0.6"/><rect x="250" y="438" width="80" height="8" fill="#e8607a" opacity="0.8"/><rect x="254" y="452" width="72" height="8" fill="#e8607a" opacity="0.9"/><rect x="368" y="438" width="85" height="8" fill="#e8607a" opacity="0.8"/><rect x="372" y="452" width="77" height="8" fill="#e8607a" opacity="0.9"/><rect x="483" y="438" width="85" height="8" fill="#e86a8a" opacity="0.8"/><rect x="487" y="452" width="77" height="8" fill="#e86a8a" opacity="0.9"/><rect x="600" y="438" width="90" height="8" fill="#9a6ab0" opacity="0.8"/><rect x="604" y="452" width="82" height="8" fill="#9a6ab0" opacity="0.9"/><rect x="712" y="438" width="95" height="8" fill="#e8607a" opacity="0.8"/><rect x="716" y="452" width="87" height="8" fill="#e8607a" opacity="0.9"/><rect x="226" y="480" width="140" height="20" fill="#4e6a26"/><rect x="366" y="480" width="78" height="20" fill="#7a5ab0"/><rect x="450" y="480" width="143" height="20" fill="#26348a"/><rect x="598" y="480" width="115" height="20" fill="#5c6a26"/><rect x="713" y="480" width="105" height="20" fill="#6a6a6a"/><rect x="610" y="486" width="95" height="8" fill="#eee" opacity="0.8"/><rect x="470" y="486" width="100" height="8" fill="#ccd" opacity="0.7"/><rect x="236" y="512" width="60" height="6" fill="#444" opacity="0.6"/><rect x="655" y="512" width="40" height="6" fill="#555" opacity="0.6"/><rect x="705" y="512" width="100" height="6" fill="#888"/><rect x="250" y="535" width="555" height="5" fill="#555" opacity="0.6"/><rect x="240" y="547" width="565" height="5" fill="#444" opacity="0.6"/><rect x="240" y="558" width="250" height="5" fill="#555" opacity="0.6"/><rect x="60" y="42" width="835" height="148" fill="#e9edf3" filter="url(#bb3)"/><rect x="63" y="40" width="830" height="145" rx="6" fill="#fff"/><rect x="93" y="41" width="34" height="23" fill="#1f86d6"/><rect x="132" y="43" width="30" height="19" fill="#9cc9ea"/><rect x="185" y="49" width="8" height="8" fill="#777" opacity="0.6"/><rect x="215" y="49" width="8" height="8" fill="#777" opacity="0.6"/><rect x="250" y="49" width="8" height="8" fill="#777" opacity="0.6"/><rect x="285" y="49" width="8" height="8" fill="#777" opacity="0.6"/><rect x="318" y="44" width="55" height="16" fill="#e4e4e4"/><rect x="868" y="52" width="14" height="5" fill="#bbb"/><rect x="115" y="77" width="40" height="5" fill="#999"/><rect x="76" y="98" width="8" height="8" fill="#d83a3a"/><rect x="98" y="100" width="70" height="5" fill="#666" opacity="0.6"/><rect x="175" y="100" width="95" height="5" fill="#9ab6d6"/><rect x="76" y="120" width="8" height="8" fill="#d83a3a"/><rect x="98" y="122" width="75" height="5" fill="#555" opacity="0.6"/><rect x="180" y="122" width="60" height="5" fill="#aab"/><rect x="76" y="142" width="8" height="8" fill="#d83a3a"/><rect x="98" y="144" width="60" height="5" fill="#555" opacity="0.6"/><rect x="165" y="144" width="70" height="5" fill="#444" opacity="0.6"/><rect x="245" y="144" width="25" height="5" fill="#888"/><rect x="275" y="144" width="530" height="5" fill="#7aa2d6"/><rect x="76" y="164" width="8" height="8" fill="#d83a3a"/><rect x="98" y="166" width="70" height="5" fill="#666" opacity="0.6"/><rect x="175" y="166" width="235" height="5" fill="#9ab6d6"/><rect x="76" y="33" width="8" height="8" fill="#d83a3a"/><rect x="76" y="54" width="8" height="8" fill="#d83a3a"/><rect x="1042" y="118" width="7" height="108" rx="3" fill="#6a6a6a"/><rect x="1012" y="262" width="20" height="42" rx="4" fill="#f0a030"/><rect x="1015" y="270" width="14" height="10" fill="#f8d080"/><rect x="1019" y="322" width="7" height="7" fill="#aaa"/><rect x="1019" y="342" width="7" height="7" fill="#aaa"/><rect x="1019" y="362" width="7" height="7" fill="#aaa"/><rect x="1019" y="382" width="7" height="7" fill="#aaa"/><rect x="1019" y="402" width="7" height="7" fill="#aaa"/><rect x="1019" y="422" width="7" height="7" fill="#aaa"/><rect x="1019" y="442" width="7" height="7" fill="#aaa"/><rect x="1019" y="462" width="7" height="7" fill="#aaa"/><rect x="1019" y="482" width="7" height="7" fill="#aaa"/><rect x="0" y="565" width="1053" height="27" fill="#dfe8f6"/><rect x="300" y="571" width="17" height="16" rx="3" fill="#2b7de0"/><rect x="326" y="571" width="17" height="16" rx="3" fill="#dfe8f6"/><rect x="352" y="571" width="17" height="16" rx="3" fill="#9aa"/><rect x="378" y="571" width="17" height="16" rx="3" fill="#dfe8f6"/><rect x="404" y="571" width="17" height="16" rx="3" fill="#555"/><rect x="430" y="571" width="17" height="16" rx="3" fill="#2a6"/><rect x="456" y="571" width="17" height="16" rx="3" fill="#15a"/><rect x="482" y="571" width="17" height="16" rx="3" fill="#36c"/><rect x="508" y="571" width="17" height="16" rx="3" fill="#258"/><rect x="534" y="571" width="17" height="16" rx="3" fill="#47b"/><rect x="560" y="571" width="17" height="16" rx="3" fill="#c74"/><rect x="586" y="571" width="17" height="16" rx="3" fill="#59c"/><rect x="612" y="571" width="17" height="16" rx="3" fill="#777"/><rect x="638" y="571" width="17" height="16" rx="3" fill="#d9b"/><rect x="664" y="571" width="17" height="16" rx="3" fill="#223"/><rect x="690" y="571" width="17" height="16" rx="3" fill="#2a8"/><rect x="716" y="571" width="17" height="16" rx="3" fill="#d44"/><rect x="10" y="574" width="40" height="9" rx="3" fill="#b9c4d6"/><rect x="960" y="574" width="80" height="9" rx="3" fill="#b9c4d6"/></svg></div>
<div class="ts" style="left:559.1px;top:318.7px">2025-04-15 19:09:58</div>
<div class="cell" style="left:901.4px;top:207.7px;height:104.1px"><svg class="thumb" style="left:76.2px" viewBox="0 0 1053 592" preserveAspectRatio="none"><defs><clipPath id="ccv"><rect x="125" y="95" width="636" height="442"/></clipPath><filter id="cb1" x="-20%" y="-20%" width="140%" height="140%"><feGaussianBlur stdDeviation="18"/></filter><filter id="cb2" x="-20%" y="-20%" width="140%" height="140%"><feGaussianBlur stdDeviation="7"/></filter><filter id="cb3" x="-20%" y="-20%" width="140%" height="140%"><feGaussianBlur stdDeviation="3"/></filter></defs><rect x="0" y="0" width="1053" height="592" fill="#fff"/><rect x="0" y="0" width="1053" height="24" fill="#dbe6f8"/><rect x="405" y="3" width="115" height="21" rx="4" fill="#fdfdff"/><rect x="30" y="8" width="60" height="7" rx="2" fill="#5b6f96" opacity="0.55"/><rect x="160" y="8" width="90" height="7" rx="2" fill="#8aa0c8" opacity="0.55"/><rect x="290" y="8" width="100" height="7" rx="2" fill="#3d59c8" opacity="0.55"/><rect x="420" y="8" width="45" height="7" rx="2" fill="#222" opacity="0.55"/><rect x="545" y="8" width="110" height="7" rx="2" fill="#7c93c0" opacity="0.55"/><rect x="680" y="8" width="100" height="7" rx="2" fill="#7c93c0" opacity="0.55"/><rect x="800" y="8" width="45" height="7" rx="2" fill="#8aa0c8" opacity="0.55"/><rect x="0" y="24" width="1053" height="22" fill="#f8fafd"/><rect x="62" y="28" width="770" height="14" rx="7" fill="#edf1f8"/><rect x="80" y="32" width="80" height="5" fill="#9aa3b3"/><rect x="990" y="29" width="45" height="11" rx="5" fill="#b7c6e6"/><rect x="870" y="31" width="9" height="8" fill="#a5adbb"/><rect x="895" y="31" width="9" height="8" fill="#a5adbb"/><rect x="930" y="31" width="9" height="8" fill="#a5adbb"/><rect x="955" y="31" width="9" height="8" fill="#a5adbb"/><rect x="5" y="52" width="12" height="6" fill="#555"/><rect x="1000" y="52" width="40" height="5" fill="#c0c6d0"/><rect x="0" y="67" width="1053" height="497" fill="#15172a"/><rect x="370" y="75" width="320" height="15" rx="7" fill="#2c2e40"/><rect x="650" y="77" width="38" height="11" rx="5" fill="#e8e8ee"/><rect x="22" y="76" width="38" height="13" fill="#f2f2f5"/><rect x="890" y="76" width="9" height="12" fill="#6d6f80"/><rect x="915" y="76" width="9" height="12" fill="#6d6f80"/><rect x="940" y="76" width="9" height="12" fill="#6d6f80"/><rect x="965" y="76" width="9" height="12" fill="#6d6f80"/><rect x="990" y="76" width="9" height="12" fill="#6d6f80"/><circle cx="1030" cy="82" r="9" fill="#f5f5f5"/><rect x="22" y="108" width="10" height="7" fill="#9a9cac"/><rect x="40" y="108" width="22" height="7" fill="#8a8c9c"/><rect x="22" y="131" width="10" height="7" fill="#9a9cac"/><rect x="40" y="131" width="22" height="7" fill="#8a8c9c"/><rect x="22" y="166" width="10" height="7" fill="#9a9cac"/><rect x="40" y="166" width="22" height="7" fill="#8a8c9c"/><rect x="22" y="190" width="10" height="7" fill="#9a9cac"/><rect x="40" y="190" width="22" height="7" fill="#8a8c9c"/><rect x="22" y="213" width="10" height="7" fill="#9a9cac"/><rect x="40" y="213" width="22" height="7" fill="#8a8c9c"/><rect x="22" y="248" width="10" height="7" fill="#9a9cac"/><rect x="40" y="248" width="22" height="7" fill="#8a8c9c"/><rect x="22" y="271" width="10" height="7" fill="#9a9cac"/><rect x="40" y="271" width="22" height="7" fill="#8a8c9c"/><rect x="22" y="294" width="10" height="7" fill="#9a9cac"/><rect x="40" y="294" width="22" height="7" fill="#8a8c9c"/><rect x="14" y="160" width="62" height="20" rx="4" fill="#2c2f45"/><rect x="22" y="166" width="10" height="8" fill="#fff"/><rect x="40" y="166" width="22" height="8" fill="#e5e5ea"/><rect x="70" y="188" width="7" height="7" fill="#e0405a"/><circle cx="108" cy="132" r="7" fill="#f4f4f4" opacity="0.9"/><circle cx="108" cy="160" r="7" fill="#b89a6a" opacity="0.9"/><circle cx="108" cy="188" r="7" fill="#9a8a80" opacity="0.9"/><circle cx="108" cy="216" r="7" fill="#f0e8d8" opacity="0.9"/><circle cx="108" cy="244" r="7" fill="#c8c0b8" opacity="0.9"/><circle cx="108" cy="272" r="7" fill="#8a8a96" opacity="0.9"/><circle cx="108" cy="300" r="7" fill="#f4f4f4" opacity="0.9"/><circle cx="108" cy="328" r="7" fill="#b89a6a" opacity="0.9"/><circle cx="108" cy="356" r="7" fill="#9a8a80" opacity="0.9"/><circle cx="108" cy="384" r="7" fill="#f0e8d8" opacity="0.9"/><circle cx="108" cy="412" r="7" fill="#c8c0b8" opacity="0.9"/><circle cx="108" cy="440" r="7" fill="#8a8a96" opacity="0.9"/><circle cx="108" cy="468" r="7" fill="#f4f4f4" opacity="0.9"/><circle cx="108" cy="496" r="7" fill="#b89a6a" opacity="0.9"/><circle cx="108" cy="524" r="7" fill="#9a8a80" opacity="0.9"/><rect x="100" y="548" width="16" height="16" rx="4" fill="#a8d628"/><g clip-path="url(#ccv)"><rect x="125" y="95" width="195" height="442" fill="#45443a"/><g filter="url(#cb1)"><rect x="120" y="390" width="200" height="160" fill="#4c6220"/><rect x="120" y="80" width="200" height="130" fill="#34352f"/><rect x="200" y="200" width="120" height="200" fill="#5a5248"/></g><rect x="318" y="95" width="247" height="442" fill="#5e605e"/><g filter="url(#cb2)"><rect x="318" y="95" width="120" height="120" fill="#335222"/><ellipse cx="360" cy="150" rx="50" ry="40" fill="#4a7a2a"/><rect x="318" y="215" width="247" height="230" fill="#626462"/><rect x="318" y="440" width="247" height="97" fill="#4a4c48"/><ellipse cx="395" cy="490" rx="75" ry="42" fill="#4f8a1e"/><ellipse cx="350" cy="500" rx="30" ry="30" fill="#2a4a18"/><path d="M430 537 C470 500 540 500 565 480 L565 537 Z" fill="#2a2020"/><rect x="425" y="175" width="115" height="280" rx="40" fill="#1b191c"/><ellipse cx="535" cy="230" rx="32" ry="62" fill="#e6bcc6"/><ellipse cx="468" cy="140" rx="55" ry="36" fill="#d02e48"/><ellipse cx="490" cy="195" rx="30" ry="26" fill="#e6c4b8"/><path d="M338 300 L425 190 L455 215 L385 325 Z" fill="#e9c5ae"/><rect x="462" y="265" width="46" height="170" fill="#b4507a"/><ellipse cx="492" cy="128" rx="20" ry="11" fill="#f2dede"/><ellipse cx="500" cy="450" rx="35" ry="22" fill="#2c2a2e"/></g><rect x="563" y="95" width="198" height="442" fill="#3d2c38"/><g filter="url(#cb1)"><ellipse cx="690" cy="340" rx="55" ry="120" fill="#633c54"/><rect x="560" y="95" width="80" height="442" fill="#33262e"/><rect x="600" y="95" width="170" height="90" fill="#4a3840"/></g><rect x="133" y="492" width="100" height="9" fill="#f2f2f2"/><rect x="240" y="493" width="30" height="7" fill="#aaa"/><rect x="133" y="512" width="170" height="8" fill="#d8c060"/></g><circle cx="735" cy="285" r="6" fill="#f0f0f0"/><circle cx="735" cy="320" r="6" fill="#f0f0f0"/><circle cx="735" cy="360" r="6" fill="#f0f0f0"/><circle cx="735" cy="400" r="6" fill="#f0f0f0"/><circle cx="735" cy="440" r="6" fill="#f0f0f0"/><circle cx="735" cy="478" r="6" fill="#f0f0f0"/><rect x="727" y="492" width="16" height="5" fill="#ddd"/><rect x="125" y="537" width="636" height="27" fill="#191b29"/><rect x="140" y="547" width="8" height="7" fill="#9a9cab"/><rect x="160" y="547" width="42" height="7" fill="#9a9cab"/><rect x="215" y="547" width="10" height="7" fill="#9a9cab"/><rect x="232" y="547" width="90" height="7" fill="#9a9cab"/><rect x="340" y="547" width="10" height="7" fill="#9a9cab"/><rect x="555" y="547" width="13" height="7" fill="#b8bac6"/><rect x="577" y="547" width="13" height="7" fill="#b8bac6"/><rect x="599" y="547" width="13" height="7" fill="#b8bac6"/><rect x="621" y="547" width="13" height="7" fill="#b8bac6"/><rect x="643" y="547" width="13" height="7" fill="#b8bac6"/><rect x="665" y="547" width="13" height="7" fill="#b8bac6"/><rect x="687" y="547" width="13" height="7" fill="#b8bac6"/><rect x="709" y="547" width="13" height="7" fill="#b8bac6"/><rect x="731" y="547" width="13" height="7" fill="#b8bac6"/><rect x="760" y="95" width="255" height="469" fill="#2a2428"/><rect x="770" y="110" width="40" height="7" fill="#aaa" opacity="0.7"/><rect x="835" y="110" width="22" height="7" fill="#fff" opacity="0.7"/><rect x="880" y="110" width="55" height="7" fill="#888" opacity="0.7"/><rect x="770" y="140" width="45" height="7" fill="#ccc" opacity="0.7"/><rect x="825" y="140" width="70" height="7" fill="#c8a040" opacity="0.7"/><rect x="770" y="158" width="50" height="7" fill="#ddd" opacity="0.7"/><rect x="800" y="175" width="30" height="7" fill="#bbb" opacity="0.7"/><rect x="795" y="193" width="70" height="7" fill="#eee" opacity="0.7"/><rect x="870" y="193" width="90" height="7" fill="#c8a040" opacity="0.7"/><rect x="795" y="208" width="45" height="7" fill="#eee" opacity="0.7"/><rect x="795" y="232" width="100" height="7" fill="#777" opacity="0.7"/><rect x="800" y="272" width="18" height="7" fill="#bbb" opacity="0.7"/><rect x="795" y="290" width="70" height="7" fill="#eee" opacity="0.7"/><rect x="795" y="322" width="90" height="7" fill="#777" opacity="0.7"/><rect x="800" y="342" width="22" height="7" fill="#bbb" opacity="0.7"/><rect x="795" y="360" width="50" height="7" fill="#eee" opacity="0.7"/><rect x="795" y="392" width="90" height="7" fill="#777" opacity="0.7"/><rect x="800" y="412" width="14" height="7" fill="#bbb" opacity="0.7"/><rect x="795" y="430" width="85" height="7" fill="#eee" opacity="0.7"/><rect x="795" y="462" width="90" height="7" fill="#777" opacity="0.7"/><rect x="800" y="482" width="28" height="7" fill="#bbb" opacity="0.7"/><rect x="830" y="500" width="60" height="7" fill="#e8c070" opacity="0.7"/><circle cx="780" cy="178" r="9" fill="#d8d8d8"/><circle cx="780" cy="282" r="9" fill="#c0c0c0"/><circle cx="780" cy="348" r="9" fill="#c8a890"/><circle cx="780" cy="418" r="9" fill="#c0c0c8"/><circle cx="780" cy="488" r="9" fill="#f0f0f0"/><rect x="795" y="498" width="30" height="26" fill="#c85040"/><rect x="765" y="528" width="235" height="26" rx="6" fill="#3d3a3d"/><rect x="780" y="537" width="60" height="7" fill="#6b686b"/><rect x="1022" y="310" width="9" height="34" rx="3" fill="#2c2f45"/><rect x="950" y="553" width="38" height="12" fill="#f2f2f2"/><rect x="0" y="565" width="1053" height="27" fill="#dfe8f6"/><rect x="300" y="571" width="17" height="16" rx="3" fill="#2b7de0"/><rect x="326" y="571" width="17" height="16" rx="3" fill="#dfe8f6"/><rect x="352" y="571" width="17" height="16" rx="3" fill="#9aa"/><rect x="378" y="571" width="17" height="16" rx="3" fill="#dfe8f6"/><rect x="404" y="571" width="17" height="16" rx="3" fill="#555"/><rect x="430" y="571" width="17" height="16" rx="3" fill="#2a6"/><rect x="456" y="571" width="17" height="16" rx="3" fill="#15a"/><rect x="482" y="571" width="17" height="16" rx="3" fill="#36c"/><rect x="508" y="571" width="17" height="16" rx="3" fill="#258"/><rect x="534" y="571" width="17" height="16" rx="3" fill="#47b"/><rect x="560" y="571" width="17" height="16" rx="3" fill="#c74"/><rect x="586" y="571" width="17" height="16" rx="3" fill="#59c"/><rect x="612" y="571" width="17" height="16" rx="3" fill="#777"/><rect x="638" y="571" width="17" height="16" rx="3" fill="#d9b"/><rect x="664" y="571" width="17" height="16" rx="3" fill="#223"/><rect x="690" y="571" width="17" height="16" rx="3" fill="#2a8"/><rect x="716" y="571" width="17" height="16" rx="3" fill="#d44"/><rect x="10" y="574" width="40" height="9" rx="3" fill="#b9c4d6"/><rect x="960" y="574" width="80" height="9" rx="3" fill="#b9c4d6"/></svg></div>
<div class="ts" style="left:901.4px;top:318.7px">2025-04-15 19:09:55</div>
<div class="cell" style="left:215.5px;top:334.6px;height:103.6px"><svg class="thumb" style="left:75.5px" viewBox="0 0 1053 592" preserveAspectRatio="none"><defs><clipPath id="dcv"><rect x="125" y="95" width="636" height="442"/></clipPath><filter id="db1" x="-20%" y="-20%" width="140%" height="140%"><feGaussianBlur stdDeviation="18"/></filter><filter id="db2" x="-20%" y="-20%" width="140%" height="140%"><feGaussianBlur stdDeviation="7"/></filter><filter id="db3" x="-20%" y="-20%" width="140%" height="140%"><feGaussianBlur stdDeviation="3"/></filter></defs><rect x="0" y="0" width="1053" height="592" fill="#fff"/><rect x="0" y="0" width="1053" height="24" fill="#dbe6f8"/><rect x="405" y="3" width="115" height="21" rx="4" fill="#fdfdff"/><rect x="30" y="8" width="60" height="7" rx="2" fill="#5b6f96" opacity="0.55"/><rect x="160" y="8" width="90" height="7" rx="2" fill="#8aa0c8" opacity="0.55"/><rect x="290" y="8" width="100" height="7" rx="2" fill="#3d59c8" opacity="0.55"/><rect x="420" y="8" width="45" height="7" rx="2" fill="#222" opacity="0.55"/><rect x="545" y="8" width="110" height="7" rx="2" fill="#7c93c0" opacity="0.55"/><rect x="680" y="8" width="100" height="7" rx="2" fill="#7c93c0" opacity="0.55"/><rect x="800" y="8" width="45" height="7" rx="2" fill="#8aa0c8" opacity="0.55"/><rect x="0" y="24" width="1053" height="22" fill="#f8fafd"/><rect x="62" y="28" width="770" height="14" rx="7" fill="#edf1f8"/><rect x="80" y="32" width="80" height="5" fill="#9aa3b3"/><rect x="990" y="29" width="45" height="11" rx="5" fill="#b7c6e6"/><rect x="870" y="31" width="9" height="8" fill="#a5adbb"/><rect x="895" y="31" width="9" height="8" fill="#a5adbb"/><rect x="930" y="31" width="9" height="8" fill="#a5adbb"/><rect x="955" y="31" width="9" height="8" fill="#a5adbb"/><rect x="5" y="52" width="12" height="6" fill="#555"/><rect x="1000" y="52" width="40" height="5" fill="#c0c6d0"/><rect x="0" y="67" width="1053" height="497" fill="#15172a"/><rect x="370" y="75" width="320" height="15" rx="7" fill="#2c2e40"/><rect x="650" y="77" width="38" height="11" rx="5" fill="#e8e8ee"/><rect x="22" y="76" width="38" height="13" fill="#f2f2f5"/><rect x="890" y="76" width="9" height="12" fill="#6d6f80"/><rect x="915" y="76" width="9" height="12" fill="#6d6f80"/><rect x="940" y="76" width="9" height="12" fill="#6d6f80"/><rect x="965" y="76" width="9" height="12" fill="#6d6f80"/><rect x="990" y="76" width="9" height="12" fill="#6d6f80"/><circle cx="1030" cy="82" r="9" fill="#f5f5f5"/><rect x="22" y="108" width="10" height="7" fill="#9a9cac"/><rect x="40" y="108" width="22" height="7" fill="#8a8c9c"/><rect x="22" y="131" width="10" height="7" fill="#9a9cac"/><rect x="40" y="131" width="22" height="7" fill="#8a8c9c"/><rect x="22" y="166" width="10" height="7" fill="#9a9cac"/><rect x="40" y="166" width="22" height="7" fill="#8a8c9c"/><rect x="22" y="190" width="10" height="7" fill="#9a9cac"/><rect x="40" y="190" width="22" height="7" fill="#8a8c9c"/><rect x="22" y="213" width="10" height="7" fill="#9a9cac"/><rect x="40" y="213" width="22" height="7" fill="#8a8c9c"/><rect x="22" y="248" width="10" height="7" fill="#9a9cac"/><rect x="40" y="248" width="22" height="7" fill="#8a8c9c"/><rect x="22" y="271" width="10" height="7" fill="#9a9cac"/><rect x="40" y="271" width="22" height="7" fill="#8a8c9c"/><rect x="22" y="294" width="10" height="7" fill="#9a9cac"/><rect x="40" y="294" width="22" height="7" fill="#8a8c9c"/><rect x="14" y="160" width="62" height="20" rx="4" fill="#2c2f45"/><rect x="22" y="166" width="10" height="8" fill="#fff"/><rect x="40" y="166" width="22" height="8" fill="#e5e5ea"/><rect x="70" y="188" width="7" height="7" fill="#e0405a"/><circle cx="108" cy="132" r="7" fill="#f4f4f4" opacity="0.9"/><circle cx="108" cy="160" r="7" fill="#b89a6a" opacity="0.9"/><circle cx="108" cy="188" r="7" fill="#9a8a80" opacity="0.9"/><circle cx="108" cy="216" r="7" fill="#f0e8d8" opacity="0.9"/><circle cx="108" cy="244" r="7" fill="#c8c0b8" opacity="0.9"/><circle cx="108" cy="272" r="7" fill="#8a8a96" opacity="0.9"/><circle cx="108" cy="300" r="7" fill="#f4f4f4" opacity="0.9"/><circle cx="108" cy="328" r="7" fill="#b89a6a" opacity="0.9"/><circle cx="108" cy="356" r="7" fill="#9a8a80" opacity="0.9"/><circle cx="108" cy="384" r="7" fill="#f0e8d8" opacity="0.9"/><circle cx="108" cy="412" r="7" fill="#c8c0b8" opacity="0.9"/><circle cx="108" cy="440" r="7" fill="#8a8a96" opacity="0.9"/><circle cx="108" cy="468" r="7" fill="#f4f4f4" opacity="0.9"/><circle cx="108" cy="496" r="7" fill="#b89a6a" opacity="0.9"/><circle cx="108" cy="524" r="7" fill="#9a8a80" opacity="0.9"/><rect x="100" y="548" width="16" height="16" rx="4" fill="#a8d628"/><g clip-path="url(#dcv)"><rect x="125" y="95" width="195" height="442" fill="#5f5850"/><g filter="url(#db1)"><rect x="120" y="80" width="90" height="470" fill="#4a4640"/><rect x="230" y="120" width="100" height="300" fill="#756c60"/><rect x="120" y="430" width="210" height="120" fill="#4d4842"/></g><rect x="318" y="95" width="247" height="442" fill="#b4b0aa"/><g filter="url(#db2)"><rect x="318" y="95" width="60" height="250" fill="#eef2ee"/><rect x="345" y="95" width="25" height="250" fill="#3a3c3e"/><rect x="370" y="95" width="60" height="170" fill="#e09a30"/><rect x="430" y="95" width="135" height="230" fill="#bcb8b2"/><rect x="318" y="350" width="90" height="120" fill="#dfe4e6"/><rect x="318" y="330" width="70" height="30" fill="#4a4846"/><path d="M380 290 L470 260 L540 290 L555 440 L400 440 Z" fill="#f2ece0"/><ellipse cx="440" cy="205" rx="38" ry="45" fill="#a85a40"/><ellipse cx="440" cy="225" rx="24" ry="30" fill="#f0d0c0"/><rect x="415" y="208" width="50" height="13" rx="5" fill="#1a1a1c"/><path d="M440 370 L530 330 L565 360 L470 450 Z" fill="#222226"/><path d="M470 440 L565 370 L565 537 L500 537 Z" fill="#e6e6e8"/><rect x="318" y="470" width="247" height="67" fill="#5a4a44"/><ellipse cx="430" cy="470" rx="25" ry="40" fill="#3a2e2c"/></g><rect x="563" y="95" width="198" height="442" fill="#645d57"/><g filter="url(#db1)"><ellipse cx="640" cy="380" rx="70" ry="110" fill="#47302c"/><rect x="700" y="95" width="70" height="442" fill="#58524e"/><rect x="560" y="95" width="210" height="120" fill="#6e6660"/></g><rect x="133" y="492" width="100" height="9" fill="#f2f2f2"/><rect x="240" y="493" width="30" height="7" fill="#aaa"/><rect x="133" y="512" width="150" height="8" fill="#e8e8e8"/></g><circle cx="735" cy="285" r="6" fill="#f0f0f0"/><circle cx="735" cy="320" r="6" fill="#f0f0f0"/><circle cx="735" cy="360" r="6" fill="#f0f0f0"/><circle cx="735" cy="400" r="6" fill="#f0f0f0"/><circle cx="735" cy="440" r="6" fill="#f0f0f0"/><circle cx="735" cy="478" r="6" fill="#f0f0f0"/><rect x="727" y="492" width="16" height="5" fill="#ddd"/><rect x="125" y="537" width="636" height="27" fill="#191b29"/><rect x="140" y="547" width="8" height="7" fill="#9a9cab"/><rect x="160" y="547" width="42" height="7" fill="#9a9cab"/><rect x="215" y="547" width="10" height="7" fill="#9a9cab"/><rect x="232" y="547" width="90" height="7" fill="#9a9cab"/><rect x="340" y="547" width="10" height="7" fill="#9a9cab"/><rect x="555" y="547" width="13" height="7" fill="#b8bac6"/><rect x="577" y="547" width="13" height="7" fill="#b8bac6"/><rect x="599" y="547" width="13" height="7" fill="#b8bac6"/><rect x="621" y="547" width="13" height="7" fill="#b8bac6"/><rect x="643" y="547" width="13" height="7" fill="#b8bac6"/><rect x="665" y="547" width="13" height="7" fill="#b8bac6"/><rect x="687" y="547" width="13" height="7" fill="#b8bac6"/><rect x="709" y="547" width="13" height="7" fill="#b8bac6"/><rect x="731" y="547" width="13" height="7" fill="#b8bac6"/><rect x="760" y="95" width="255" height="469" fill="#373331"/><rect x="770" y="110" width="40" height="7" fill="#aaa" opacity="0.7"/><rect x="835" y="110" width="22" height="7" fill="#fff" opacity="0.7"/><rect x="880" y="110" width="55" height="7" fill="#888" opacity="0.7"/><rect x="770" y="140" width="45" height="7" fill="#ccc" opacity="0.7"/><rect x="820" y="140" width="55" height="7" fill="#c8a040" opacity="0.7"/><rect x="795" y="172" width="70" height="7" fill="#ddd" opacity="0.7"/><rect x="905" y="170" width="8" height="7" fill="#ccc" opacity="0.7"/><rect x="795" y="190" width="80" height="7" fill="#eee" opacity="0.7"/><rect x="890" y="190" width="40" height="7" fill="#eee" opacity="0.7"/><rect x="945" y="190" width="50" height="7" fill="#eee" opacity="0.7"/><rect x="795" y="205" width="70" height="7" fill="#eee" opacity="0.7"/><rect x="795" y="235" width="100" height="7" fill="#777" opacity="0.7"/><rect x="800" y="275" width="40" height="7" fill="#bbb" opacity="0.7"/><rect x="795" y="390" width="90" height="7" fill="#777" opacity="0.7"/><rect x="800" y="412" width="14" height="7" fill="#bbb" opacity="0.7"/><rect x="795" y="427" width="130" height="7" fill="#eee" opacity="0.7"/><rect x="940" y="427" width="55" height="7" fill="#eee" opacity="0.7"/><rect x="795" y="445" width="60" height="7" fill="#eee" opacity="0.7"/><rect x="870" y="445" width="70" height="7" fill="#bbb" opacity="0.7"/><rect x="955" y="445" width="40" height="7" fill="#eee" opacity="0.7"/><rect x="795" y="460" width="70" height="7" fill="#aaa" opacity="0.7"/><rect x="795" y="485" width="90" height="7" fill="#777" opacity="0.7"/><circle cx="776" cy="180" r="9" fill="#e8e8e8"/><circle cx="776" cy="278" r="9" fill="#888"/><circle cx="776" cy="418" r="8" fill="#222"/><rect x="793" y="297" width="66" height="68" fill="#f6f6f2"/><circle cx="826" cy="332" r="24" fill="#f2d84a"/><circle cx="826" cy="336" r="12" fill="#faf6e0"/><rect x="765" y="528" width="235" height="26" rx="6" fill="#3d3a3d"/><rect x="780" y="537" width="60" height="7" fill="#6b686b"/><rect x="1022" y="310" width="9" height="34" rx="3" fill="#2c2f45"/><rect x="950" y="553" width="38" height="12" fill="#f2f2f2"/><rect x="0" y="565" width="1053" height="27" fill="#dfe8f6"/><rect x="300" y="571" width="17" height="16" rx="3" fill="#2b7de0"/><rect x="326" y="571" width="17" height="16" rx="3" fill="#dfe8f6"/><rect x="352" y="571" width="17" height="16" rx="3" fill="#9aa"/><rect x="378" y="571" width="17" height="16" rx="3" fill="#dfe8f6"/><rect x="404" y="571" width="17" height="16" rx="3" fill="#555"/><rect x="430" y="571" width="17" height="16" rx="3" fill="#2a6"/><rect x="456" y="571" width="17" height="16" rx="3" fill="#15a"/><rect x="482" y="571" width="17" height="16" rx="3" fill="#36c"/><rect x="508" y="571" width="17" height="16" rx="3" fill="#258"/><rect x="534" y="571" width="17" height="16" rx="3" fill="#47b"/><rect x="560" y="571" width="17" height="16" rx="3" fill="#c74"/><rect x="586" y="571" width="17" height="16" rx="3" fill="#59c"/><rect x="612" y="571" width="17" height="16" rx="3" fill="#777"/><rect x="638" y="571" width="17" height="16" rx="3" fill="#d9b"/><rect x="664" y="571" width="17" height="16" rx="3" fill="#223"/><rect x="690" y="571" width="17" height="16" rx="3" fill="#2a8"/><rect x="716" y="571" width="17" height="16" rx="3" fill="#d44"/><rect x="10" y="574" width="40" height="9" rx="3" fill="#b9c4d6"/><rect x="960" y="574" width="80" height="9" rx="3" fill="#b9c4d6"/></svg></div>
<div class="ts" style="left:215.5px;top:445.0px">2025-04-15 19:09:52</div>
<div class="cell" style="left:559.1px;top:334.6px;height:103.6px"><svg class="thumb" style="left:74.8px" viewBox="0 0 1053 592" preserveAspectRatio="none"><defs><clipPath id="ecv"><rect x="125" y="95" width="636" height="442"/></clipPath><filter id="eb1" x="-20%" y="-20%" width="140%" height="140%"><feGaussianBlur stdDeviation="18"/></filter><filter id="eb2" x="-20%" y="-20%" width="140%" height="140%"><feGaussianBlur stdDeviation="7"/></filter><filter id="eb3" x="-20%" y="-20%" width="140%" height="140%"><feGaussianBlur stdDeviation="3"/></filter></defs><rect x="0" y="0" width="1053" height="592" fill="#fff"/><rect x="0" y="0" width="1053" height="24" fill="#dbe6f8"/><rect x="405" y="3" width="115" height="21" rx="4" fill="#fdfdff"/><rect x="30" y="8" width="60" height="7" rx="2" fill="#5b6f96" opacity="0.55"/><rect x="160" y="8" width="90" height="7" rx="2" fill="#8aa0c8" opacity="0.55"/><rect x="290" y="8" width="100" height="7" rx="2" fill="#3d59c8" opacity="0.55"/><rect x="420" y="8" width="45" height="7" rx="2" fill="#222" opacity="0.55"/><rect x="545" y="8" width="110" height="7" rx="2" fill="#7c93c0" opacity="0.55"/><rect x="680" y="8" width="100" height="7" rx="2" fill="#7c93c0" opacity="0.55"/><rect x="800" y="8" width="45" height="7" rx="2" fill="#8aa0c8" opacity="0.55"/><rect x="0" y="24" width="1053" height="22" fill="#f8fafd"/><rect x="62" y="28" width="770" height="14" rx="7" fill="#edf1f8"/><rect x="80" y="32" width="80" height="5" fill="#9aa3b3"/><rect x="990" y="29" width="45" height="11" rx="5" fill="#b7c6e6"/><rect x="870" y="31" width="9" height="8" fill="#a5adbb"/><rect x="895" y="31" width="9" height="8" fill="#a5adbb"/><rect x="930" y="31" width="9" height="8" fill="#a5adbb"/><rect x="955" y="31" width="9" height="8" fill="#a5adbb"/><rect x="5" y="52" width="12" height="6" fill="#555"/><rect x="1000" y="52" width="40" height="5" fill="#c0c6d0"/><rect x="0" y="67" width="1053" height="497" fill="#15172a"/><rect x="370" y="75" width="320" height="15" rx="7" fill="#2c2e40"/><rect x="650" y="77" width="38" height="11" rx="5" fill="#e8e8ee"/><rect x="22" y="76" width="38" height="13" fill="#f2f2f5"/><rect x="890" y="76" width="9" height="12" fill="#6d6f80"/><rect x="915" y="76" width="9" height="12" fill="#6d6f80"/><rect x="940" y="76" width="9" height="12" fill="#6d6f80"/><rect x="965" y="76" width="9" height="12" fill="#6d6f80"/><rect x="990" y="76" width="9" height="12" fill="#6d6f80"/><circle cx="1030" cy="82" r="9" fill="#f5f5f5"/><rect x="22" y="108" width="10" height="7" fill="#9a9cac"/><rect x="40" y="108" width="22" height="7" fill="#8a8c9c"/><rect x="22" y="131" width="10" height="7" fill="#9a9cac"/><rect x="40" y="131" width="22" height="7" fill="#8a8c9c"/><rect x="22" y="166" width="10" height="7" fill="#9a9cac"/><rect x="40" y="166" width="22" height="7" fill="#8a8c9c"/><rect x="22" y="190" width="10" height="7" fill="#9a9cac"/><rect x="40" y="190" width="22" height="7" fill="#8a8c9c"/><rect x="22" y="213" width="10" height="7" fill="#9a9cac"/><rect x="40" y="213" width="22" height="7" fill="#8a8c9c"/><rect x="22" y="248" width="10" height="7" fill="#9a9cac"/><rect x="40" y="248" width="22" height="7" fill="#8a8c9c"/><rect x="22" y="271" width="10" height="7" fill="#9a9cac"/><rect x="40" y="271" width="22" height="7" fill="#8a8c9c"/><rect x="22" y="294" width="10" height="7" fill="#9a9cac"/><rect x="40" y="294" width="22" height="7" fill="#8a8c9c"/><rect x="14" y="160" width="62" height="20" rx="4" fill="#2c2f45"/><rect x="22" y="166" width="10" height="8" fill="#fff"/><rect x="40" y="166" width="22" height="8" fill="#e5e5ea"/><rect x="70" y="188" width="7" height="7" fill="#e0405a"/><circle cx="108" cy="132" r="7" fill="#f4f4f4" opacity="0.9"/><circle cx="108" cy="160" r="7" fill="#b89a6a" opacity="0.9"/><circle cx="108" cy="188" r="7" fill="#9a8a80" opacity="0.9"/><circle cx="108" cy="216" r="7" fill="#f0e8d8" opacity="0.9"/><circle cx="108" cy="244" r="7" fill="#c8c0b8" opacity="0.9"/><circle cx="108" cy="272" r="7" fill="#8a8a96" opacity="0.9"/><circle cx="108" cy="300" r="7" fill="#f4f4f4" opacity="0.9"/><circle cx="108" cy="328" r="7" fill="#b89a6a" opacity="0.9"/><circle cx="108" cy="356" r="7" fill="#9a8a80" opacity="0.9"/><circle cx="108" cy="384" r="7" fill="#f0e8d8" opacity="0.9"/><circle cx="108" cy="412" r="7" fill="#c8c0b8" opacity="0.9"/><circle cx="108" cy="440" r="7" fill="#8a8a96" opacity="0.9"/><circle cx="108" cy="468" r="7" fill="#f4f4f4" opacity="0.9"/><circle cx="108" cy="496" r="7" fill="#b89a6a" opacity="0.9"/><circle cx="108" cy="524" r="7" fill="#9a8a80" opacity="0.9"/><rect x="100" y="548" width="16" height="16" rx="4" fill="#a8d628"/><g clip-path="url(#ecv)"><rect x="125" y="95" width="636" height="442" fill="#081424"/><defs><radialGradient id="erg" cx="0.4" cy="0.45" r="0.6"><stop offset="0" stop-color="#2b5d86"/><stop offset="0.5" stop-color="#0f2c4a"/><stop offset="1" stop-color="#060f1c"/></radialGradient></defs><rect x="125" y="95" width="636" height="442" fill="url(#erg)"/><g filter="url(#eb3)" stroke="#4aa0c0" stroke-width="5" opacity="0.55"><line x1="283" y1="235" x2="125" y2="130" stroke-dasharray="22 9"/><line x1="283" y1="273" x2="125" y2="230" stroke-dasharray="22 9"/><line x1="283" y1="311" x2="125" y2="330" stroke-dasharray="22 9"/><line x1="283" y1="353" x2="125" y2="440" stroke-dasharray="22 9"/><line x1="311" y1="390" x2="200" y2="537" stroke-dasharray="22 9"/><line x1="361" y1="390" x2="330" y2="537" stroke-dasharray="22 9"/><line x1="433" y1="390" x2="520" y2="537" stroke-dasharray="22 9"/><line x1="524" y1="376" x2="761" y2="500" stroke-dasharray="22 9"/><line x1="524" y1="338" x2="761" y2="400" stroke-dasharray="22 9"/><line x1="524" y1="300" x2="761" y2="300" stroke-dasharray="22 9"/><line x1="524" y1="262" x2="761" y2="200" stroke-dasharray="22 9"/><line x1="501" y1="222" x2="700" y2="95" stroke-dasharray="22 9"/><line x1="448" y1="222" x2="560" y2="95" stroke-dasharray="22 9"/><line x1="395" y1="222" x2="420" y2="95" stroke-dasharray="22 9"/><line x1="330" y1="222" x2="250" y2="95" stroke-dasharray="22 9"/></g><circle cx="350" cy="295" r="108" fill="#4f7fa4" opacity="0.55" filter="url(#eb3)"/><circle cx="350" cy="295" r="100" fill="none" stroke="#8fc0de" stroke-width="3" opacity="0.6"/><ellipse cx="345" cy="395" rx="75" ry="14" fill="#3a8fc0" opacity="0.8" filter="url(#eb3)"/><path d="M318 305 L318 270 A30 32 0 0 1 378 270 L378 305" fill="none" stroke="#f4f8fa" stroke-width="16"/><rect x="298" y="296" width="104" height="88" rx="5" fill="#e4ecf0"/><rect x="312" y="310" width="76" height="60" fill="#cfdde6"/><rect x="278" y="440" width="325" height="24" fill="#101820" opacity="0.6"/><rect x="280" y="443" width="320" height="18" fill="#f0d428" filter="url(#eb3)"/><rect x="301" y="442" width="3" height="20" fill="#1a2a30" opacity="0.7"/><rect x="324" y="442" width="3" height="20" fill="#1a2a30" opacity="0.7"/><rect x="347" y="442" width="3" height="20" fill="#1a2a30" opacity="0.7"/><rect x="370" y="442" width="3" height="20" fill="#1a2a30" opacity="0.7"/><rect x="393" y="442" width="3" height="20" fill="#1a2a30" opacity="0.7"/><rect x="416" y="442" width="3" height="20" fill="#1a2a30" opacity="0.7"/><rect x="439" y="442" width="3" height="20" fill="#1a2a30" opacity="0.7"/><rect x="462" y="442" width="3" height="20" fill="#1a2a30" opacity="0.7"/><rect x="485" y="442" width="3" height="20" fill="#1a2a30" opacity="0.7"/><rect x="508" y="442" width="3" height="20" fill="#1a2a30" opacity="0.7"/><rect x="531" y="442" width="3" height="20" fill="#1a2a30" opacity="0.7"/><rect x="554" y="442" width="3" height="20" fill="#1a2a30" opacity="0.7"/><rect x="577" y="442" width="3" height="20" fill="#1a2a30" opacity="0.7"/><rect x="600" y="442" width="3" height="20" fill="#1a2a30" opacity="0.7"/><rect x="133" y="492" width="120" height="8" fill="#f2f2f2"/><rect x="262" y="493" width="40" height="7" fill="#aaa"/><rect x="133" y="510" width="150" height="8" fill="#e8e8e8"/><rect x="288" y="510" width="170" height="8" fill="#d8c060"/></g><circle cx="735" cy="285" r="6" fill="#f0f0f0"/><circle cx="735" cy="320" r="6" fill="#f0f0f0"/><circle cx="735" cy="360" r="6" fill="#f0f0f0"/><circle cx="735" cy="400" r="6" fill="#f0f0f0"/><circle cx="735" cy="440" r="6" fill="#f0f0f0"/><circle cx="735" cy="478" r="6" fill="#f0f0f0"/><rect x="727" y="492" width="16" height="5" fill="#ddd"/><rect x="125" y="537" width="636" height="27" fill="#191b29"/><rect x="140" y="547" width="8" height="7" fill="#9a9cab"/><rect x="160" y="547" width="42" height="7" fill="#9a9cab"/><rect x="215" y="547" width="10" height="7" fill="#9a9cab"/><rect x="232" y="547" width="90" height="7" fill="#9a9cab"/><rect x="340" y="547" width="10" height="7" fill="#9a9cab"/><rect x="555" y="547" width="13" height="7" fill="#b8bac6"/><rect x="577" y="547" width="13" height="7" fill="#b8bac6"/><rect x="599" y="547" width="13" height="7" fill="#b8bac6"/><rect x="621" y="547" width="13" height="7" fill="#b8bac6"/><rect x="643" y="547" width="13" height="7" fill="#b8bac6"/><rect x="665" y="547" width="13" height="7" fill="#b8bac6"/><rect x="687" y="547" width="13" height="7" fill="#b8bac6"/><rect x="709" y="547" width="13" height="7" fill="#b8bac6"/><rect x="731" y="547" width="13" height="7" fill="#b8bac6"/><rect x="760" y="95" width="255" height="469" fill="#0e141c"/><rect x="770" y="110" width="40" height="7" fill="#aaa" opacity="0.7"/><rect x="835" y="110" width="22" height="7" fill="#fff" opacity="0.7"/><rect x="880" y="110" width="55" height="7" fill="#888" opacity="0.7"/><rect x="770" y="140" width="45" height="7" fill="#ccc" opacity="0.7"/><rect x="865" y="368" width="28" height="7" fill="#555" opacity="0.7"/><g fill="#6f747c"><ellipse cx="872" cy="318" rx="15" ry="12"/><ellipse cx="890" cy="305" rx="15" ry="12"/></g><rect x="765" y="528" width="235" height="26" rx="6" fill="#3d3a3d"/><rect x="780" y="537" width="60" height="7" fill="#6b686b"/><rect x="1022" y="310" width="9" height="34" rx="3" fill="#2c2f45"/><rect x="950" y="553" width="38" height="12" fill="#f2f2f2"/><rect x="0" y="565" width="1053" height="27" fill="#dfe8f6"/><rect x="300" y="571" width="17" height="16" rx="3" fill="#2b7de0"/><rect x="326" y="571" width="17" height="16" rx="3" fill="#dfe8f6"/><rect x="352" y="571" width="17" height="16" rx="3" fill="#9aa"/><rect x="378" y="571" width="17" height="16" rx="3" fill="#dfe8f6"/><rect x="404" y="571" width="17" height="16" rx="3" fill="#555"/><rect x="430" y="571" width="17" height="16" rx="3" fill="#2a6"/><rect x="456" y="571" width="17" height="16" rx="3" fill="#15a"/><rect x="482" y="571" width="17" height="16" rx="3" fill="#36c"/><rect x="508" y="571" width="17" height="16" rx="3" fill="#258"/><rect x="534" y="571" width="17" height="16" rx="3" fill="#47b"/><rect x="560" y="571" width="17" height="16" rx="3" fill="#c74"/><rect x="586" y="571" width="17" height="16" rx="3" fill="#59c"/><rect x="612" y="571" width="17" height="16" rx="3" fill="#777"/><rect x="638" y="571" width="17" height="16" rx="3" fill="#d9b"/><rect x="664" y="571" width="17" height="16" rx="3" fill="#223"/><rect x="690" y="571" width="17" height="16" rx="3" fill="#2a8"/><rect x="716" y="571" width="17" height="16" rx="3" fill="#d44"/><rect x="10" y="574" width="40" height="9" rx="3" fill="#b9c4d6"/><rect x="960" y="574" width="80" height="9" rx="3" fill="#b9c4d6"/></svg></div>
<div class="ts" style="left:559.1px;top:445.0px">2025-04-15 19:09:49</div>
<div class="cell" style="left:901.4px;top:334.6px;height:103.6px"><svg class="thumb" style="left:76.2px" viewBox="0 0 1053 592" preserveAspectRatio="none"><defs><clipPath id="fcv"><rect x="125" y="95" width="636" height="442"/></clipPath><filter id="fb1" x="-20%" y="-20%" width="140%" height="140%"><feGaussianBlur stdDeviation="18"/></filter><filter id="fb2" x="-20%" y="-20%" width="140%" height="140%"><feGaussianBlur stdDeviation="7"/></filter><filter id="fb3" x="-20%" y="-20%" width="140%" height="140%"><feGaussianBlur stdDeviation="3"/></filter></defs><rect x="0" y="0" width="1053" height="592" fill="#fff"/><rect x="0" y="0" width="1053" height="24" fill="#dbe6f8"/><rect x="405" y="3" width="115" height="21" rx="4" fill="#fdfdff"/><rect x="30" y="8" width="60" height="7" rx="2" fill="#5b6f96" opacity="0.55"/><rect x="160" y="8" width="90" height="7" rx="2" fill="#8aa0c8" opacity="0.55"/><rect x="290" y="8" width="100" height="7" rx="2" fill="#3d59c8" opacity="0.55"/><rect x="420" y="8" width="45" height="7" rx="2" fill="#222" opacity="0.55"/><rect x="545" y="8" width="110" height="7" rx="2" fill="#7c93c0" opacity="0.55"/><rect x="680" y="8" width="100" height="7" rx="2" fill="#7c93c0" opacity="0.55"/><rect x="800" y="8" width="45" height="7" rx="2" fill="#8aa0c8" opacity="0.55"/><rect x="0" y="24" width="1053" height="22" fill="#f8fafd"/><rect x="62" y="28" width="770" height="14" rx="7" fill="#edf1f8"/><rect x="80" y="32" width="80" height="5" fill="#9aa3b3"/><rect x="990" y="29" width="45" height="11" rx="5" fill="#b7c6e6"/><rect x="870" y="31" width="9" height="8" fill="#a5adbb"/><rect x="895" y="31" width="9" height="8" fill="#a5adbb"/><rect x="930" y="31" width="9" height="8" fill="#a5adbb"/><rect x="955" y="31" width="9" height="8" fill="#a5adbb"/><rect x="5" y="52" width="12" height="6" fill="#555"/><rect x="1000" y="52" width="40" height="5" fill="#c0c6d0"/><rect x="0" y="67" width="1053" height="497" fill="#15172a"/><rect x="370" y="75" width="320" height="15" rx="7" fill="#2c2e40"/><rect x="650" y="77" width="38" height="11" rx="5" fill="#e8e8ee"/><rect x="22" y="76" width="38" height="13" fill="#f2f2f5"/><rect x="890" y="76" width="9" height="12" fill="#6d6f80"/><rect x="915" y="76" width="9" height="12" fill="#6d6f80"/><rect x="940" y="76" width="9" height="12" fill="#6d6f80"/><rect x="965" y="76" width="9" height="12" fill="#6d6f80"/><rect x="990" y="76" width="9" height="12" fill="#6d6f80"/><circle cx="1030" cy="82" r="9" fill="#f5f5f5"/><rect x="22" y="108" width="10" height="7" fill="#9a9cac"/><rect x="40" y="108" width="22" height="7" fill="#8a8c9c"/><rect x="22" y="131" width="10" height="7" fill="#9a9cac"/><rect x="40" y="131" width="22" height="7" fill="#8a8c9c"/><rect x="22" y="166" width="10" height="7" fill="#9a9cac"/><rect x="40" y="166" width="22" height="7" fill="#8a8c9c"/><rect x="22" y="190" width="10" height="7" fill="#9a9cac"/><rect x="40" y="190" width="22" height="7" fill="#8a8c9c"/><rect x="22" y="213" width="10" height="7" fill="#9a9cac"/><rect x="40" y="213" width="22" height="7" fill="#8a8c9c"/><rect x="22" y="248" width="10" height="7" fill="#9a9cac"/><rect x="40" y="248" width="22" height="7" fill="#8a8c9c"/><rect x="22" y="271" width="10" height="7" fill="#9a9cac"/><rect x="40" y="271" width="22" height="7" fill="#8a8c9c"/><rect x="22" y="294" width="10" height="7" fill="#9a9cac"/><rect x="40" y="294" width="22" height="7" fill="#8a8c9c"/><rect x="14" y="160" width="62" height="20" rx="4" fill="#2c2f45"/><rect x="22" y="166" width="10" height="8" fill="#fff"/><rect x="40" y="166" width="22" height="8" fill="#e5e5ea"/><rect x="70" y="188" width="7" height="7" fill="#e0405a"/><circle cx="108" cy="132" r="7" fill="#f4f4f4" opacity="0.9"/><circle cx="108" cy="160" r="7" fill="#b89a6a" opacity="0.9"/><circle cx="108" cy="188" r="7" fill="#9a8a80" opacity="0.9"/><circle cx="108" cy="216" r="7" fill="#f0e8d8" opacity="0.9"/><circle cx="108" cy="244" r="7" fill="#c8c0b8" opacity="0.9"/><circle cx="108" cy="272" r="7" fill="#8a8a96" opacity="0.9"/><circle cx="108" cy="300" r="7" fill="#f4f4f4" opacity="0.9"/><circle cx="108" cy="328" r="7" fill="#b89a6a" opacity="0.9"/><circle cx="108" cy="356" r="7" fill="#9a8a80" opacity="0.9"/><circle cx="108" cy="384" r="7" fill="#f0e8d8" opacity="0.9"/><circle cx="108" cy="412" r="7" fill="#c8c0b8" opacity="0.9"/><circle cx="108" cy="440" r="7" fill="#8a8a96" opacity="0.9"/><circle cx="108" cy="468" r="7" fill="#f4f4f4" opacity="0.9"/><circle cx="108" cy="496" r="7" fill="#b89a6a" opacity="0.9"/><circle cx="108" cy="524" r="7" fill="#9a8a80" opacity="0.9"/><rect x="100" y="548" width="16" height="16" rx="4" fill="#a8d628"/><g clip-path="url(#fcv)"><rect x="125" y="95" width="195" height="442" fill="#5a5250"/><g filter="url(#fb1)"><rect x="120" y="80" width="80" height="470" fill="#3c3236"/><rect x="200" y="150" width="130" height="300" fill="#7a716c"/><rect x="120" y="450" width="210" height="100" fill="#4a4244"/></g><rect x="318" y="95" width="247" height="442" fill="#3a2420"/><g filter="url(#fb2)"><rect x="335" y="120" width="190" height="300" fill="#e6e2c8"/><rect x="325" y="150" width="45" height="300" fill="#4a2a26"/><rect x="525" y="95" width="40" height="442" fill="#4a2420"/><ellipse cx="445" cy="235" rx="45" ry="55" fill="#2a2024"/><ellipse cx="452" cy="285" rx="26" ry="30" fill="#e8cfc4"/><path d="M340 537 L345 370 L420 320 L490 320 L565 380 L565 537 Z" fill="#ece6e0"/><path d="M470 420 L565 360 L565 470 L500 500 Z" fill="#f2d8d0"/></g><rect x="563" y="95" width="198" height="442" fill="#5a4e4e"/><g filter="url(#fb1)"><ellipse cx="640" cy="200" rx="60" ry="110" fill="#42282c"/><rect x="690" y="200" width="80" height="340" fill="#6a605c"/><rect x="560" y="380" width="150" height="160" fill="#665c58"/></g><rect x="133" y="492" width="95" height="9" fill="#f2f2f2"/><rect x="240" y="493" width="30" height="7" fill="#aaa"/><rect x="133" y="512" width="200" height="8" fill="#d8c878"/></g><circle cx="735" cy="285" r="6" fill="#f0f0f0"/><circle cx="735" cy="320" r="6" fill="#f0f0f0"/><circle cx="735" cy="360" r="6" fill="#f0f0f0"/><circle cx="735" cy="400" r="6" fill="#f0f0f0"/><circle cx="735" cy="440" r="6" fill="#f0f0f0"/><circle cx="735" cy="478" r="6" fill="#f0f0f0"/><rect x="727" y="492" width="16" height="5" fill="#ddd"/><rect x="125" y="537" width="636" height="27" fill="#191b29"/><rect x="140" y="547" width="8" height="7" fill="#9a9cab"/><rect x="160" y="547" width="42" height="7" fill="#9a9cab"/><rect x="215" y="547" width="10" height="7" fill="#9a9cab"/><rect x="232" y="547" width="90" height="7" fill="#9a9cab"/><rect x="340" y="547" width="10" height="7" fill="#9a9cab"/><rect x="555" y="547" width="13" height="7" fill="#b8bac6"/><rect x="577" y="547" width="13" height="7" fill="#b8bac6"/><rect x="599" y="547" width="13" height="7" fill="#b8bac6"/><rect x="621" y="547" width="13" height="7" fill="#b8bac6"/><rect x="643" y="547" width="13" height="7" fill="#b8bac6"/><rect x="665" y="547" width="13" height="7" fill="#b8bac6"/><rect x="687" y="547" width="13" height="7" fill="#b8bac6"/><rect x="709" y="547" width="13" height="7" fill="#b8bac6"/><rect x="731" y="547" width="13" height="7" fill="#b8bac6"/><rect x="760" y="95" width="255" height="469" fill="#3a3230"/><rect x="770" y="110" width="40" height="7" fill="#aaa" opacity="0.7"/><rect x="835" y="110" width="22" height="7" fill="#fff" opacity="0.7"/><rect x="880" y="110" width="55" height="7" fill="#888" opacity="0.7"/><rect x="770" y="140" width="45" height="7" fill="#ccc" opacity="0.7"/><rect x="820" y="140" width="55" height="7" fill="#c8a040" opacity="0.7"/><rect x="770" y="158" width="35" height="7" fill="#ddd" opacity="0.7"/><rect x="795" y="200" width="60" height="7" fill="#999" opacity="0.7"/><rect x="795" y="228" width="90" height="7" fill="#777" opacity="0.7"/><rect x="795" y="252" width="85" height="7" fill="#ddd" opacity="0.7"/><rect x="795" y="340" width="60" height="7" fill="#999" opacity="0.7"/><rect x="795" y="355" width="90" height="7" fill="#777" opacity="0.7"/><rect x="800" y="375" width="40" height="7" fill="#bbb" opacity="0.7"/><rect x="795" y="390" width="90" height="7" fill="#eee" opacity="0.7"/><rect x="795" y="480" width="40" height="7" fill="#999" opacity="0.7"/><rect x="795" y="498" width="90" height="7" fill="#777" opacity="0.7"/><rect x="793" y="168" width="62" height="26" fill="#e8e8ee"/><circle cx="778" cy="258" r="8" fill="#c8a890"/><circle cx="778" cy="382" r="8" fill="#333"/><ellipse cx="822" cy="305" rx="24" ry="26" fill="#7a4a7a"/><ellipse cx="822" cy="312" rx="14" ry="12" fill="#e8c8d8"/><rect x="790" y="400" width="68" height="66" fill="#f4f4f4"/><ellipse cx="824" cy="430" rx="20" ry="22" fill="#5a3a2a"/><rect x="765" y="528" width="235" height="26" rx="6" fill="#3d3a3d"/><rect x="780" y="537" width="60" height="7" fill="#6b686b"/><rect x="1022" y="310" width="9" height="34" rx="3" fill="#2c2f45"/><rect x="950" y="553" width="38" height="12" fill="#f2f2f2"/><rect x="0" y="565" width="1053" height="27" fill="#dfe8f6"/><rect x="300" y="571" width="17" height="16" rx="3" fill="#2b7de0"/><rect x="326" y="571" width="17" height="16" rx="3" fill="#dfe8f6"/><rect x="352" y="571" width="17" height="16" rx="3" fill="#9aa"/><rect x="378" y="571" width="17" height="16" rx="3" fill="#dfe8f6"/><rect x="404" y="571" width="17" height="16" rx="3" fill="#555"/><rect x="430" y="571" width="17" height="16" rx="3" fill="#2a6"/><rect x="456" y="571" width="17" height="16" rx="3" fill="#15a"/><rect x="482" y="571" width="17" height="16" rx="3" fill="#36c"/><rect x="508" y="571" width="17" height="16" rx="3" fill="#258"/><rect x="534" y="571" width="17" height="16" rx="3" fill="#47b"/><rect x="560" y="571" width="17" height="16" rx="3" fill="#c74"/><rect x="586" y="571" width="17" height="16" rx="3" fill="#59c"/><rect x="612" y="571" width="17" height="16" rx="3" fill="#777"/><rect x="638" y="571" width="17" height="16" rx="3" fill="#d9b"/><rect x="664" y="571" width="17" height="16" rx="3" fill="#223"/><rect x="690" y="571" width="17" height="16" rx="3" fill="#2a8"/><rect x="716" y="571" width="17" height="16" rx="3" fill="#d44"/><rect x="10" y="574" width="40" height="9" rx="3" fill="#b9c4d6"/><rect x="960" y="574" width="80" height="9" rx="3" fill="#b9c4d6"/></svg></div>
<div class="ts" style="left:901.4px;top:445.0px">2025-04-15 19:09:46</div>
<div class="cell" style="left:215.5px;top:460.9px;height:103.4px"><svg class="thumb" style="left:75.5px" viewBox="0 0 1053 592" preserveAspectRatio="none"><defs><clipPath id="gcv"><rect x="125" y="95" width="636" height="442"/></clipPath><filter id="gb1" x="-20%" y="-20%" width="140%" height="140%"><feGaussianBlur stdDeviation="18"/></filter><filter id="gb2" x="-20%" y="-20%" width="140%" height="140%"><feGaussianBlur stdDeviation="7"/></filter><filter id="gb3" x="-20%" y="-20%" width="140%" height="140%"><feGaussianBlur stdDeviation="3"/></filter></defs><rect x="0" y="0" width="1053" height="592" fill="#fff"/><rect x="0" y="0" width="1053" height="24" fill="#dbe6f8"/><rect x="405" y="3" width="115" height="21" rx="4" fill="#fdfdff"/><rect x="30" y="8" width="60" height="7" rx="2" fill="#5b6f96" opacity="0.55"/><rect x="160" y="8" width="90" height="7" rx="2" fill="#8aa0c8" opacity="0.55"/><rect x="290" y="8" width="100" height="7" rx="2" fill="#3d59c8" opacity="0.55"/><rect x="420" y="8" width="45" height="7" rx="2" fill="#222" opacity="0.55"/><rect x="545" y="8" width="110" height="7" rx="2" fill="#7c93c0" opacity="0.55"/><rect x="680" y="8" width="100" height="7" rx="2" fill="#7c93c0" opacity="0.55"/><rect x="800" y="8" width="45" height="7" rx="2" fill="#8aa0c8" opacity="0.55"/><rect x="0" y="24" width="1053" height="22" fill="#f8fafd"/><rect x="62" y="28" width="770" height="14" rx="7" fill="#edf1f8"/><rect x="80" y="32" width="80" height="5" fill="#9aa3b3"/><rect x="990" y="29" width="45" height="11" rx="5" fill="#b7c6e6"/><rect x="870" y="31" width="9" height="8" fill="#a5adbb"/><rect x="895" y="31" width="9" height="8" fill="#a5adbb"/><rect x="930" y="31" width="9" height="8" fill="#a5adbb"/><rect x="955" y="31" width="9" height="8" fill="#a5adbb"/><rect x="5" y="52" width="12" height="6" fill="#555"/><rect x="1000" y="52" width="40" height="5" fill="#c0c6d0"/><rect x="0" y="67" width="1053" height="497" fill="#15172a"/><rect x="370" y="75" width="320" height="15" rx="7" fill="#2c2e40"/><rect x="650" y="77" width="38" height="11" rx="5" fill="#e8e8ee"/><rect x="22" y="76" width="38" height="13" fill="#f2f2f5"/><rect x="890" y="76" width="9" height="12" fill="#6d6f80"/><rect x="915" y="76" width="9" height="12" fill="#6d6f80"/><rect x="940" y="76" width="9" height="12" fill="#6d6f80"/><rect x="965" y="76" width="9" height="12" fill="#6d6f80"/><rect x="990" y="76" width="9" height="12" fill="#6d6f80"/><circle cx="1030" cy="82" r="9" fill="#f5f5f5"/><rect x="22" y="108" width="10" height="7" fill="#9a9cac"/><rect x="40" y="108" width="22" height="7" fill="#8a8c9c"/><rect x="22" y="131" width="10" height="7" fill="#9a9cac"/><rect x="40" y="131" width="22" height="7" fill="#8a8c9c"/><rect x="22" y="166" width="10" height="7" fill="#9a9cac"/><rect x="40" y="166" width="22" height="7" fill="#8a8c9c"/><rect x="22" y="190" width="10" height="7" fill="#9a9cac"/><rect x="40" y="190" width="22" height="7" fill="#8a8c9c"/><rect x="22" y="213" width="10" height="7" fill="#9a9cac"/><rect x="40" y="213" width="22" height="7" fill="#8a8c9c"/><rect x="22" y="248" width="10" height="7" fill="#9a9cac"/><rect x="40" y="248" width="22" height="7" fill="#8a8c9c"/><rect x="22" y="271" width="10" height="7" fill="#9a9cac"/><rect x="40" y="271" width="22" height="7" fill="#8a8c9c"/><rect x="22" y="294" width="10" height="7" fill="#9a9cac"/><rect x="40" y="294" width="22" height="7" fill="#8a8c9c"/><rect x="14" y="160" width="62" height="20" rx="4" fill="#2c2f45"/><rect x="22" y="166" width="10" height="8" fill="#fff"/><rect x="40" y="166" width="22" height="8" fill="#e5e5ea"/><rect x="70" y="188" width="7" height="7" fill="#e0405a"/><circle cx="108" cy="132" r="7" fill="#f4f4f4" opacity="0.9"/><circle cx="108" cy="160" r="7" fill="#b89a6a" opacity="0.9"/><circle cx="108" cy="188" r="7" fill="#9a8a80" opacity="0.9"/><circle cx="108" cy="216" r="7" fill="#f0e8d8" opacity="0.9"/><circle cx="108" cy="244" r="7" fill="#c8c0b8" opacity="0.9"/><circle cx="108" cy="272" r="7" fill="#8a8a96" opacity="0.9"/><circle cx="108" cy="300" r="7" fill="#f4f4f4" opacity="0.9"/><circle cx="108" cy="328" r="7" fill="#b89a6a" opacity="0.9"/><circle cx="108" cy="356" r="7" fill="#9a8a80" opacity="0.9"/><circle cx="108" cy="384" r="7" fill="#f0e8d8" opacity="0.9"/><circle cx="108" cy="412" r="7" fill="#c8c0b8" opacity="0.9"/><circle cx="108" cy="440" r="7" fill="#8a8a96" opacity="0.9"/><circle cx="108" cy="468" r="7" fill="#f4f4f4" opacity="0.9"/><circle cx="108" cy="496" r="7" fill="#b89a6a" opacity="0.9"/><circle cx="108" cy="524" r="7" fill="#9a8a80" opacity="0.9"/><rect x="100" y="548" width="16" height="16" rx="4" fill="#a8d628"/><g clip-path="url(#gcv)"><rect x="125" y="95" width="195" height="442" fill="#5a5250"/><g filter="url(#gb1)"><rect x="120" y="80" width="80" height="470" fill="#3c3236"/><rect x="200" y="150" width="130" height="300" fill="#7a716c"/><rect x="120" y="450" width="210" height="100" fill="#4a4244"/></g><rect x="318" y="95" width="247" height="442" fill="#3a2420"/><g filter="url(#gb2)"><rect x="335" y="120" width="185" height="300" fill="#e8e6d2"/><rect x="325" y="150" width="45" height="330" fill="#4a2a26"/><rect x="525" y="95" width="40" height="442" fill="#4a2420"/><ellipse cx="465" cy="245" rx="45" ry="55" fill="#2a2428"/><ellipse cx="450" cy="300" rx="22" ry="28" fill="#e8d4cc"/><path d="M330 400 L440 330 L500 340 L540 537 L380 537 L330 470 Z" fill="#eeeae6"/><ellipse cx="500" cy="380" rx="50" ry="50" fill="#e89870"/><path d="M400 537 L420 430 L520 420 L540 537 Z" fill="#f0ece8"/></g><rect x="563" y="95" width="198" height="442" fill="#5a4e4e"/><g filter="url(#gb1)"><ellipse cx="640" cy="200" rx="60" ry="110" fill="#42282c"/><rect x="690" y="200" width="80" height="340" fill="#6a605c"/><rect x="560" y="380" width="150" height="160" fill="#665c58"/></g><rect x="133" y="492" width="95" height="9" fill="#f2f2f2"/><rect x="240" y="493" width="30" height="7" fill="#aaa"/><rect x="133" y="512" width="200" height="8" fill="#d8c878"/></g><circle cx="735" cy="285" r="6" fill="#f0f0f0"/><circle cx="735" cy="320" r="6" fill="#f0f0f0"/><circle cx="735" cy="360" r="6" fill="#f0f0f0"/><circle cx="735" cy="400" r="6" fill="#f0f0f0"/><circle cx="735" cy="440" r="6" fill="#f0f0f0"/><circle cx="735" cy="478" r="6" fill="#f0f0f0"/><rect x="727" y="492" width="16" height="5" fill="#ddd"/><rect x="125" y="537" width="636" height="27" fill="#191b29"/><rect x="140" y="547" width="8" height="7" fill="#9a9cab"/><rect x="160" y="547" width="42" height="7" fill="#9a9cab"/><rect x="215" y="547" width="10" height="7" fill="#9a9cab"/><rect x="232" y="547" width="90" height="7" fill="#9a9cab"/><rect x="340" y="547" width="10" height="7" fill="#9a9cab"/><rect x="555" y="547" width="13" height="7" fill="#b8bac6"/><rect x="577" y="547" width="13" height="7" fill="#b8bac6"/><rect x="599" y="547" width="13" height="7" fill="#b8bac6"/><rect x="621" y="547" width="13" height="7" fill="#b8bac6"/><rect x="643" y="547" width="13" height="7" fill="#b8bac6"/><rect x="665" y="547" width="13" height="7" fill="#b8bac6"/><rect x="687" y="547" width="13" height="7" fill="#b8bac6"/><rect x="709" y="547" width="13" height="7" fill="#b8bac6"/><rect x="731" y="547" width="13" height="7" fill="#b8bac6"/><rect x="760" y="95" width="255" height="469" fill="#3a3230"/><rect x="770" y="110" width="40" height="7" fill="#aaa" opacity="0.7"/><rect x="835" y="110" width="22" height="7" fill="#fff" opacity="0.7"/><rect x="880" y="110" width="55" height="7" fill="#888" opacity="0.7"/><rect x="770" y="140" width="45" height="7" fill="#ccc" opacity="0.7"/><rect x="820" y="140" width="55" height="7" fill="#c8a040" opacity="0.7"/><rect x="770" y="158" width="40" height="7" fill="#ddd" opacity="0.7"/><rect x="795" y="238" width="40" height="7" fill="#999" opacity="0.7"/><rect x="795" y="255" width="90" height="7" fill="#777" opacity="0.7"/><rect x="795" y="282" width="20" height="7" fill="#bbb" opacity="0.7"/><rect x="795" y="296" width="110" height="7" fill="#eee" opacity="0.7"/><rect x="915" y="296" width="70" height="7" fill="#c8a868" opacity="0.7"/><rect x="795" y="395" width="90" height="7" fill="#777" opacity="0.7"/><rect x="795" y="422" width="20" height="7" fill="#bbb" opacity="0.7"/><rect x="795" y="492" width="40" height="7" fill="#999" opacity="0.7"/><rect x="795" y="508" width="90" height="7" fill="#777" opacity="0.7"/><rect x="815" y="178" width="20" height="34" rx="8" fill="#e8b020"/><circle cx="776" cy="283" r="9" fill="#ccc"/><circle cx="776" cy="425" r="8" fill="#a89060"/><rect x="790" y="312" width="74" height="68" fill="#f4f2ee"/><rect x="800" y="325" width="50" height="5" fill="#bbb"/><rect x="800" y="340" width="40" height="5" fill="#ccc"/><rect x="790" y="312" width="74" height="8" fill="#d8c060"/><rect x="790" y="435" width="68" height="45" fill="#4a6a9a"/><rect x="810" y="440" width="30" height="30" fill="#b8c8e0"/><rect x="765" y="528" width="235" height="26" rx="6" fill="#3d3a3d"/><rect x="780" y="537" width="60" height="7" fill="#6b686b"/><rect x="1022" y="310" width="9" height="34" rx="3" fill="#2c2f45"/><rect x="950" y="553" width="38" height="12" fill="#f2f2f2"/><rect x="0" y="565" width="1053" height="27" fill="#dfe8f6"/><rect x="300" y="571" width="17" height="16" rx="3" fill="#2b7de0"/><rect x="326" y="571" width="17" height="16" rx="3" fill="#dfe8f6"/><rect x="352" y="571" width="17" height="16" rx="3" fill="#9aa"/><rect x="378" y="571" width="17" height="16" rx="3" fill="#dfe8f6"/><rect x="404" y="571" width="17" height="16" rx="3" fill="#555"/><rect x="430" y="571" width="17" height="16" rx="3" fill="#2a6"/><rect x="456" y="571" width="17" height="16" rx="3" fill="#15a"/><rect x="482" y="571" width="17" height="16" rx="3" fill="#36c"/><rect x="508" y="571" width="17" height="16" rx="3" fill="#258"/><rect x="534" y="571" width="17" height="16" rx="3" fill="#47b"/><rect x="560" y="571" width="17" height="16" rx="3" fill="#c74"/><rect x="586" y="571" width="17" height="16" rx="3" fill="#59c"/><rect x="612" y="571" width="17" height="16" rx="3" fill="#777"/><rect x="638" y="571" width="17" height="16" rx="3" fill="#d9b"/><rect x="664" y="571" width="17" height="16" rx="3" fill="#223"/><rect x="690" y="571" width="17" height="16" rx="3" fill="#2a8"/><rect x="716" y="571" width="17" height="16" rx="3" fill="#d44"/><rect x="10" y="574" width="40" height="9" rx="3" fill="#b9c4d6"/><rect x="960" y="574" width="80" height="9" rx="3" fill="#b9c4d6"/></svg></div>
<div class="ts" style="left:215.5px;top:571.9px">2025-04-15 19:09:43</div>
<div class="cell" style="left:559.1px;top:460.9px;height:103.4px"><div class="a" style="left:0;top:46.5px;width:337.2px;text-align:center;font-size:9.75px;line-height:12px;color:#555">正在加载...</div></div>
<div class="ts" style="left:559.1px;top:571.9px">2025-04-15 19:09:40</div>
<div class="cell" style="left:901.4px;top:460.9px;height:103.4px"><div class="a" style="left:0;top:46.5px;width:337.2px;text-align:center;font-size:9.75px;line-height:12px;color:#555">正在加载...</div></div>
<div class="ts" style="left:901.4px;top:571.9px">2025-04-15 19:09:37</div>
<div class="tb lat" style="left:1075.500px;top:591.500px;color:#3a3a3a">第 1 页，共 4027 页</div>
<svg class="ic" style="left:1174px;top:590px" width="64" height="14" viewBox="0 0 64 14"><g fill="none" stroke-width="1.100"><path d="M2.500 2 L2.500 12 M10.300 2 L5.300 7 L10.300 12" stroke="#999"/><path d="M25.500 2 L20.500 7 L25.500 12" stroke="#999"/><path d="M36.700 2 L41.700 7 L36.700 12" stroke="#46688c"/><path d="M51.200 2 L56.200 7 L51.200 12 M59.500 2 L59.500 12" stroke="#46688c"/></g></svg>
<div class="a" style="left:0;top:610px;width:1242px;height:14px;background:#1070c6"></div>
<div class="tb" style="left:6.500px;top:614.500px;color:#fff">就绪</div>
<svg class="ic" style="left:1089px;top:612px" width="12" height="12" viewBox="0 0 12 12"><path d="M6 0 L6 10 M1.500 5.500 L6 10.500 L10.500 5.500" fill="none" stroke="#5cc66c" stroke-width="2"/></svg>
<div class="tb" style="left:1105.500px;top:614px;color:#fff">任务中心</div>
<svg class="ic" style="left:1158px;top:614px" width="13" height="10" viewBox="0 0 13 10"><rect x="0.500" y="0.500" width="12" height="9.500" fill="#f4f4f4" stroke="#ddd" stroke-width="0.600"/><rect x="8.500" y="2" width="2.500" height="2.500" fill="#1273d0"/><rect x="2.500" y="6" width="5" height="1.500" fill="#888"/></svg>
<div class="tb" style="left:1175px;top:614px;color:#fff">13条未读信息</div>
</div></body></html>
